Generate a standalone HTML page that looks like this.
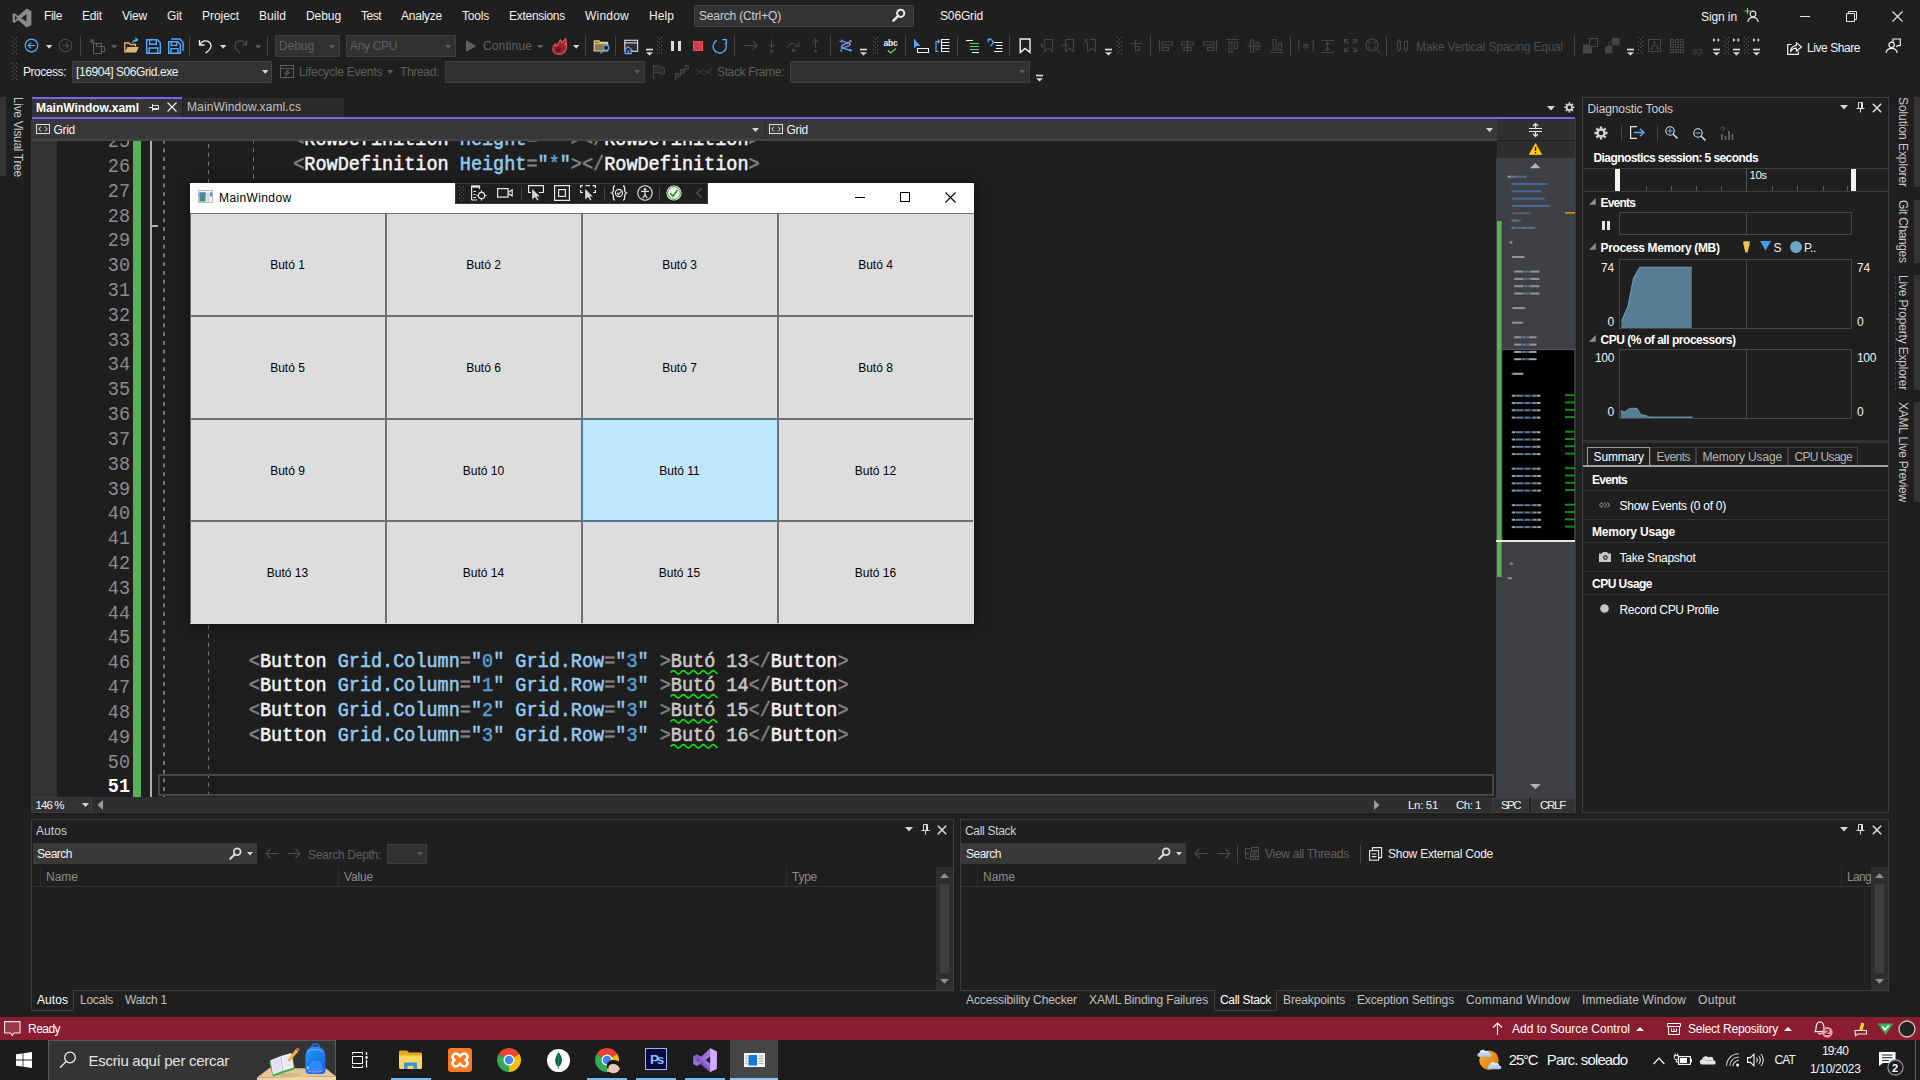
<!DOCTYPE html>
<html lang="ca"><head><meta charset="utf-8"><title>S06Grid - Microsoft Visual Studio</title>
<style>
*{box-sizing:border-box;margin:0;padding:0}
html,body{width:1920px;height:1080px;overflow:hidden}
body{background:#1f1f1f;position:relative;font-family:"Liberation Sans",sans-serif;font-size:12px;color:#fafafa;line-height:1}
.a{position:absolute}
.t{position:absolute;white-space:nowrap;line-height:16px;height:16px}
.dim{color:#6d6d6d}
svg{position:absolute;overflow:visible}
.combo{position:absolute;background:#333333;border:1px solid #424242}
.sep{position:absolute;width:1px;background:#424242}
.grip{position:absolute;width:5px;background-image:radial-gradient(circle,#5a5a5a 0.6px,transparent 0.9px);background-size:2px 2px}
.arr{position:absolute;width:0;height:0;border-left:3px solid transparent;border-right:3px solid transparent;border-top:3px solid #d0d0d0}
.arr.d{border-top-color:#5c5c5c}
.cl{-webkit-text-stroke:0.5px;transform:scaleY(1.07);transform-origin:0 17.3px;position:absolute;left:128px;white-space:pre;font-family:"Liberation Mono",monospace;font-size:18.51px;line-height:24.82px;height:24.82px;color:#c8c8c8}
.ln{transform:scaleY(1.1);transform-origin:0 0;position:absolute;left:58px;width:40px;text-align:right;font-family:"Liberation Mono",monospace;font-size:18.51px;line-height:24.82px;height:24.82px;color:#8c8c8c}
.ln.cur{color:#ffffff;font-weight:bold}
.cp{color:#808080}.ce{color:#f4f4f4}.cn{color:#92caf4}.cq{color:#92caf4}.cv{color:#569cd6}.cx{color:#c8c8c8}
.sq{position:relative;display:inline-block}
.gd{width:1.25px;background-image:repeating-linear-gradient(to bottom,#767676 0,#767676 4.3px,transparent 4.3px,transparent 8.76px);background-size:1.5px 8.76px;background-repeat:repeat-y}
.btn{position:absolute;background:#dddddd;border:1px solid #707070;color:#000;font-size:12px;display:flex;align-items:center;justify-content:center;letter-spacing:0;padding-top:1px;padding-right:1px}
.btn.hot{background:#bee6fd;border-color:#3c7fb1}

</style></head>
<body>
<!-- g_top -->
<svg style="left:12px;top:8px;" width="20" height="20" viewBox="0 0 20 20"><path d="M14.6 0.6 L19.4 2.9 V17.1 L14.6 19.4 L6.2 11.9 L2.3 14.9 L0.6 14 V6 L2.3 5.1 L6.2 8.1 Z M14.4 6.2 L9.3 10 L14.4 13.8 Z M2.9 7.6 V12.4 L5.3 10 Z" fill="#8a8a8a" fill-rule="evenodd"/></svg>
<span class="t" style="left:44px;top:7.84px;color:#f1f1f1;letter-spacing:-0.334px;">File</span>
<span class="t" style="left:82px;top:7.84px;color:#f1f1f1;letter-spacing:-0.169px;">Edit</span>
<span class="t" style="left:122px;top:7.84px;color:#f1f1f1;letter-spacing:-0.198px;">View</span>
<span class="t" style="left:167px;top:7.84px;color:#f1f1f1;letter-spacing:-0.111px;">Git</span>
<span class="t" style="left:202px;top:7.84px;color:#f1f1f1;letter-spacing:-0.049px;">Project</span>
<span class="t" style="left:259px;top:7.84px;color:#f1f1f1;letter-spacing:0.063px;">Build</span>
<span class="t" style="left:306px;top:7.84px;color:#f1f1f1;letter-spacing:-0.072px;">Debug</span>
<span class="t" style="left:361px;top:7.84px;color:#f1f1f1;letter-spacing:-0.502px;">Test</span>
<span class="t" style="left:401px;top:7.84px;color:#f1f1f1;letter-spacing:-0.241px;">Analyze</span>
<span class="t" style="left:462px;top:7.84px;color:#f1f1f1;letter-spacing:-0.202px;">Tools</span>
<span class="t" style="left:509px;top:7.84px;color:#f1f1f1;letter-spacing:-0.270px;">Extensions</span>
<span class="t" style="left:585px;top:7.84px;color:#f1f1f1;letter-spacing:0.220px;">Window</span>
<span class="t" style="left:649px;top:7.84px;color:#f1f1f1;letter-spacing:0.080px;">Help</span>
<div class="a" style="left:694px;top:5px;width:220px;height:22px;background:#333333;border:1px solid #424242;"></div>
<span class="t" style="left:699px;top:7.84px;color:#d0d0d0;letter-spacing:-0.157px;">Search (Ctrl+Q)</span>
<svg style="left:892px;top:8px;" width="14" height="14" viewBox="0 0 14 14"><circle cx="8.7" cy="5.3" r="3.6" fill="none" stroke="#e8e8e8" stroke-width="2"/><path d="M6.2 7.8 L1.4 12.6" stroke="#e8e8e8" stroke-width="2.5" stroke-linecap="round"/></svg>
<span class="t" style="left:940px;top:7.84px;color:#f1f1f1;letter-spacing:-0.146px;">S06Grid</span>
<span class="t" style="left:1701px;top:8.84px;color:#f1f1f1;letter-spacing:-0.099px;">Sign in</span>
<svg style="left:1744px;top:7px;" width="16" height="16" viewBox="0 0 16 16"><circle cx="9" cy="7" r="2.8" fill="none" stroke="#e0e0e0" stroke-width="1.2"/><path d="M3.8 15 C4.4 11.6 6.4 10.4 9 10.4 C11.6 10.4 13.6 11.6 14.2 15" fill="none" stroke="#e0e0e0" stroke-width="1.2"/><path d="M3.5 1 V7 M0.5 4 H6.5" stroke="#5fd35f" stroke-width="1.2"/></svg>
<div class="a" style="left:1800px;top:16px;width:10px;height:1px;background:#e6e6e6;"></div>
<svg style="left:1846px;top:11px;" width="11" height="11" viewBox="0 0 11 11"><path d="M0.5 2.5 H8.5 V10.5 H0.5 Z M2.5 2.5 V0.5 H10.5 V8.5 H8.5" fill="none" stroke="#e6e6e6" stroke-width="1"/></svg>
<svg style="left:1892px;top:11px;" width="11" height="11" viewBox="0 0 11 11"><path d="M0.5 0.5 L10.5 10.5 M10.5 0.5 L0.5 10.5" stroke="#e6e6e6" stroke-width="1.1"/></svg>
<svg style="left:12px;top:37px;" width="5" height="18" viewBox="0 0 5 18"><rect x="0" y="0" width="1" height="1" fill="#5c5c5c"/><rect x="4" y="0" width="1" height="1" fill="#5c5c5c"/><rect x="2" y="2" width="1" height="1" fill="#5c5c5c"/><rect x="0" y="4" width="1" height="1" fill="#5c5c5c"/><rect x="4" y="4" width="1" height="1" fill="#5c5c5c"/><rect x="2" y="6" width="1" height="1" fill="#5c5c5c"/><rect x="0" y="8" width="1" height="1" fill="#5c5c5c"/><rect x="4" y="8" width="1" height="1" fill="#5c5c5c"/><rect x="2" y="10" width="1" height="1" fill="#5c5c5c"/><rect x="0" y="12" width="1" height="1" fill="#5c5c5c"/><rect x="4" y="12" width="1" height="1" fill="#5c5c5c"/><rect x="2" y="14" width="1" height="1" fill="#5c5c5c"/><rect x="0" y="16" width="1" height="1" fill="#5c5c5c"/><rect x="4" y="16" width="1" height="1" fill="#5c5c5c"/></svg>
<svg style="left:24px;top:38px;" width="16" height="16" viewBox="0 0 16 16"><circle cx="7.5" cy="7.5" r="6.3" fill="none" stroke="#55aaff" stroke-width="1.2"/><path d="M11 7.5 H4.5 M7.2 4.6 L4.3 7.5 L7.2 10.4" fill="none" stroke="#55aaff" stroke-width="1.2"/></svg>
<svg style="left:46px;top:45px;" width="6.4" height="3.7" viewBox="0 0 6.4 3.7"><path d="M0 0H6.4 L3.2 3.7Z" fill="#d6d6d6"/></svg>
<svg style="left:58px;top:38px;" width="16" height="16" viewBox="0 0 16 16"><circle cx="7.5" cy="7.5" r="6.3" fill="none" stroke="#4a4a4a" stroke-width="1.1"/><path d="M4 7.5 H10.5 M7.8 4.6 L10.7 7.5 L7.8 10.4" fill="none" stroke="#4a4a4a" stroke-width="1.1"/></svg>
<div class="sep" style="left:80px;top:36px;height:20px;background:#424242"></div>
<svg style="left:89px;top:38px;" width="16" height="16" viewBox="0 0 16 16"><path d="M4.5 5.5 H12.5 V15.5 H4.5 Z M7.5 8.5 H15.5 V13.5 H12.5 M7.5 8.5 V5.5" fill="none" stroke="#5f5f5f" stroke-width="1"/><path d="M3 0.5 V5.5 M0.5 3 H5.5 M1.2 1.2 L4.8 4.8 M4.8 1.2 L1.2 4.8" stroke="#5f5f5f" stroke-width="0.8"/></svg>
<svg style="left:111px;top:45px;" width="6.4" height="3.7" viewBox="0 0 6.4 3.7"><path d="M0 0H6.4 L3.2 3.7Z" fill="#5c5c5c"/></svg>
<svg style="left:124px;top:38px;" width="16" height="16" viewBox="0 0 16 16"><path d="M0.8 14.5 V5 H5 L6.3 6.5 H11.5 V8.5" fill="none" stroke="#dcb67a" stroke-width="1.3"/><path d="M0.8 14.5 L3.4 9 H14.8 L12.2 14.5 Z" fill="#dcb67a"/><path d="M8.8 5 C9 2.8 10.5 1.8 13 1.8 M11.4 0 L13.4 1.8 L11.4 3.8" fill="none" stroke="#55aaff" stroke-width="1.3"/></svg>
<svg style="left:146px;top:39px;" width="15" height="15" viewBox="0 0 15 15"><path d="M0.7 0.7 H11.3 L14.3 3.7 V14.3 H0.7 Z" fill="none" stroke="#55aaff" stroke-width="1.4"/><path d="M3.7 0.7 V5.3 H10.3 V0.7 M3.2 14.3 V9 H11.8 V14.3" fill="none" stroke="#55aaff" stroke-width="1.4"/></svg>
<svg style="left:168px;top:38px;" width="16" height="16" viewBox="0 0 16 16"><path d="M0.7 3.7 H9.8 L12.3 6.2 V15.3 H0.7 Z" fill="none" stroke="#55aaff" stroke-width="1.4"/><path d="M3.2 3.7 V7.4 H8.8 V3.7 M3 15.3 V10.6 H10 V15.3" fill="none" stroke="#55aaff" stroke-width="1.3"/><path d="M3.2 1 H11.8 L15 4.2 V13" fill="none" stroke="#55aaff" stroke-width="1.4"/></svg>
<div class="sep" style="left:189px;top:36px;height:20px;background:#424242"></div>
<svg style="left:198px;top:38px;" width="16" height="16" viewBox="0 0 16 16"><path d="M1.5 2 V7 H6.5" fill="none" stroke="#f1f1f1" stroke-width="1.3"/><path d="M1.8 6.8 C3.5 3.2 7.5 1.8 10.6 3.6 C13.8 5.6 13.6 9.4 11.4 11.6 L7.6 15.2" fill="none" stroke="#f1f1f1" stroke-width="1.3"/></svg>
<svg style="left:220px;top:45px;" width="6.4" height="3.7" viewBox="0 0 6.4 3.7"><path d="M0 0H6.4 L3.2 3.7Z" fill="#d6d6d6"/></svg>
<svg style="left:232px;top:38px;" width="16" height="16" viewBox="0 0 16 16"><path d="M14.5 2 V7 H9.5" fill="none" stroke="#4d4d4d" stroke-width="1.2"/><path d="M14.2 6.8 C12.5 3.2 8.5 1.8 5.4 3.6 C2.2 5.6 2.4 9.4 4.6 11.6 L8.4 15.2" fill="none" stroke="#4d4d4d" stroke-width="1.2"/></svg>
<svg style="left:255px;top:45px;" width="6.4" height="3.7" viewBox="0 0 6.4 3.7"><path d="M0 0H6.4 L3.2 3.7Z" fill="#5c5c5c"/></svg>
<div class="sep" style="left:267px;top:36px;height:20px;background:#424242"></div>
<div class="a" style="left:275px;top:35px;width:65px;height:22px;background:#313131;border:1px solid #3f3f3f;"></div>
<span class="t" style="left:279px;top:38.24px;color:#5f5f5f;letter-spacing:-0.072px;">Debug</span>
<svg style="left:329px;top:45px;" width="6.4" height="3.7" viewBox="0 0 6.4 3.7"><path d="M0 0H6.4 L3.2 3.7Z" fill="#5c5c5c"/></svg>
<div class="a" style="left:346px;top:35px;width:110px;height:22px;background:#313131;border:1px solid #3f3f3f;"></div>
<span class="t" style="left:350px;top:38.24px;color:#5f5f5f;letter-spacing:-0.335px;">Any CPU</span>
<svg style="left:445px;top:45px;" width="6.4" height="3.7" viewBox="0 0 6.4 3.7"><path d="M0 0H6.4 L3.2 3.7Z" fill="#5c5c5c"/></svg>
<svg style="left:466px;top:40px;" width="11" height="13" viewBox="0 0 11 13"><path d="M0 0 L10.5 6 L0 12 Z" fill="#5f5f5f"/></svg>
<span class="t" style="left:483px;top:38.24px;color:#5f5f5f;letter-spacing:0.121px;">Continue</span>
<svg style="left:537px;top:45px;" width="6.4" height="3.7" viewBox="0 0 6.4 3.7"><path d="M0 0H6.4 L3.2 3.7Z" fill="#5c5c5c"/></svg>
<svg style="left:552px;top:37.5px;" width="16" height="17" viewBox="0 0 16 17"><path d="M7 16.4 C3 16.4 0.8 14 0.8 11 C0.8 8.4 2.4 6.8 3.6 5.8 C3.6 7 4 7.8 4.8 8.2 C5.2 5.4 7.6 4.4 8.2 1.8 C9.4 2.6 9.8 3.8 9.6 5 C11.4 4 12.6 2.2 13.6 0.6 C14.6 3 14 5.2 12.8 6.8 C13.6 6.6 14 6.2 14.4 5.6 C15 8 14.6 10.6 13.4 12.8 C12.2 15 9.8 16.4 7 16.4 Z" fill="#93262e" stroke="#ea4d58" stroke-width="1.2" stroke-linejoin="round"/><circle cx="6.4" cy="11.6" r="2.5" fill="#6a161c"/></svg>
<svg style="left:573px;top:45px;" width="6.4" height="3.7" viewBox="0 0 6.4 3.7"><path d="M0 0H6.4 L3.2 3.7Z" fill="#d6d6d6"/></svg>
<div class="sep" style="left:585px;top:36px;height:20px;background:#424242"></div>
<svg style="left:593px;top:38px;" width="16" height="16" viewBox="0 0 16 16"><path d="M1.2 2.9 H6 L7.4 4.4 H14.6 V13 H1.2 Z" fill="#8a7a52" stroke="#e8cd8b" stroke-width="1.2" stroke-linejoin="round"/><path d="M1.2 5.6 H14.6" stroke="#e8cd8b" stroke-width="1"/><circle cx="13.1" cy="9.8" r="2.6" fill="#1f1f1f" stroke="#55aaff" stroke-width="1.3"/><path d="M11.2 11.8 L7.4 15.4" stroke="#55aaff" stroke-width="1.4"/></svg>
<div class="sep" style="left:615px;top:36px;height:20px;background:#424242"></div>
<svg style="left:623px;top:38px;" width="16" height="16" viewBox="0 0 16 16"><rect x="1.8" y="2.3" width="12.8" height="11" fill="#2d2d2d" stroke="#d4d4d4" stroke-width="1.2"/><path d="M1.8 4.9 H14.6" stroke="#d4d4d4" stroke-width="1.2"/><path d="M0.8 12.6 L5.2 8.8 L9.6 12.6 M2.2 11.6 V15.6 H8.2 V11.6" fill="#1f1f1f" stroke="#55aaff" stroke-width="1.2"/><rect x="4.5" y="12.6" width="1.6" height="2.6" fill="#55aaff"/></svg>
<svg style="left:646px;top:49px;" width="7" height="7" viewBox="0 0 7 7"><rect x="0" y="-0.3" width="7" height="1.7" fill="#d6d6d6"/><path d="M0 3.2H7L3.5 6.4Z" fill="#d6d6d6"/></svg>
<svg style="left:657px;top:37px;" width="5" height="18" viewBox="0 0 5 18"><rect x="0" y="0" width="1" height="1" fill="#5c5c5c"/><rect x="4" y="0" width="1" height="1" fill="#5c5c5c"/><rect x="2" y="2" width="1" height="1" fill="#5c5c5c"/><rect x="0" y="4" width="1" height="1" fill="#5c5c5c"/><rect x="4" y="4" width="1" height="1" fill="#5c5c5c"/><rect x="2" y="6" width="1" height="1" fill="#5c5c5c"/><rect x="0" y="8" width="1" height="1" fill="#5c5c5c"/><rect x="4" y="8" width="1" height="1" fill="#5c5c5c"/><rect x="2" y="10" width="1" height="1" fill="#5c5c5c"/><rect x="0" y="12" width="1" height="1" fill="#5c5c5c"/><rect x="4" y="12" width="1" height="1" fill="#5c5c5c"/><rect x="2" y="14" width="1" height="1" fill="#5c5c5c"/><rect x="0" y="16" width="1" height="1" fill="#5c5c5c"/><rect x="4" y="16" width="1" height="1" fill="#5c5c5c"/></svg>
<div class="a" style="left:671px;top:41px;width:3.2px;height:10px;background:#dcdcdc;"></div>
<div class="a" style="left:677.6px;top:41px;width:3.2px;height:10px;background:#dcdcdc;"></div>
<div class="a" style="left:693px;top:41px;width:10px;height:10px;background:#cf3f4a;border:1px solid #ec4e59;"></div>
<svg style="left:712px;top:38px;" width="16" height="16" viewBox="0 0 16 16"><path d="M4.91 2.42 A6.6 6.6 0 1 0 13.42 5.1" fill="none" stroke="#55aaff" stroke-width="1.3"/><path d="M10.3 1.6 H14.4 V5.9" fill="none" stroke="#55aaff" stroke-width="1.3"/></svg>
<div class="sep" style="left:734px;top:36px;height:20px;background:#424242"></div>
<svg style="left:743px;top:38px;" width="16" height="16" viewBox="0 0 16 16"><path d="M1 7.5 H14 M9.5 3 L14 7.5 L9.5 12" fill="none" stroke="#454545" stroke-width="1.1"/></svg>
<svg style="left:764px;top:38px;" width="16" height="16" viewBox="0 0 16 16"><path d="M7.5 1 V9 M4.5 6.2 L7.5 9.2 L10.5 6.2" fill="none" stroke="#454545" stroke-width="1.1"/><circle cx="7.5" cy="13" r="1.6" fill="#454545"/></svg>
<svg style="left:786px;top:38px;" width="16" height="16" viewBox="0 0 16 16"><path d="M1.5 10 C2.5 5.5 8.5 3.5 12.5 8 M12.8 3.4 V8.2 H8" fill="none" stroke="#454545" stroke-width="1.1"/><circle cx="7.5" cy="12.6" r="1.6" fill="#454545"/></svg>
<svg style="left:808px;top:38px;" width="16" height="16" viewBox="0 0 16 16"><path d="M7.5 9.5 V1.5 M4.5 4.4 L7.5 1.4 L10.5 4.4" fill="none" stroke="#454545" stroke-width="1.1"/><circle cx="7.5" cy="13" r="1.6" fill="#454545"/></svg>
<div class="sep" style="left:830px;top:36px;height:20px;background:#424242"></div>
<svg style="left:838px;top:38px;" width="16" height="16" viewBox="0 0 16 16"><path d="M3.4 1.6 C4.6 5.2 12 3.4 12.4 6.4 C12 9.2 4.2 8 3.2 11.6" fill="none" stroke="#a67ee8" stroke-width="1.3"/><path d="M12.2 3 C11 6.6 4.4 5 3.4 8.6 C3.6 11.6 11 10 12.6 13.4" fill="none" stroke="#55aaff" stroke-width="1.3"/><path d="M1.6 2.6 L4.2 4.6 M11.4 11 L14 13" stroke="#55aaff" stroke-width="1.1"/><path d="M11.6 2 L14 3.4 M1.8 12.2 L4.2 13.4" stroke="#a67ee8" stroke-width="1.1"/></svg>
<svg style="left:860px;top:49px;" width="7" height="7" viewBox="0 0 7 7"><rect x="0" y="-0.3" width="7" height="1.7" fill="#d6d6d6"/><path d="M0 3.2H7L3.5 6.4Z" fill="#d6d6d6"/></svg>
<svg style="left:873px;top:37px;" width="5" height="18" viewBox="0 0 5 18"><rect x="0" y="0" width="1" height="1" fill="#5c5c5c"/><rect x="4" y="0" width="1" height="1" fill="#5c5c5c"/><rect x="2" y="2" width="1" height="1" fill="#5c5c5c"/><rect x="0" y="4" width="1" height="1" fill="#5c5c5c"/><rect x="4" y="4" width="1" height="1" fill="#5c5c5c"/><rect x="2" y="6" width="1" height="1" fill="#5c5c5c"/><rect x="0" y="8" width="1" height="1" fill="#5c5c5c"/><rect x="4" y="8" width="1" height="1" fill="#5c5c5c"/><rect x="2" y="10" width="1" height="1" fill="#5c5c5c"/><rect x="0" y="12" width="1" height="1" fill="#5c5c5c"/><rect x="4" y="12" width="1" height="1" fill="#5c5c5c"/><rect x="2" y="14" width="1" height="1" fill="#5c5c5c"/><rect x="0" y="16" width="1" height="1" fill="#5c5c5c"/><rect x="4" y="16" width="1" height="1" fill="#5c5c5c"/></svg>
<span class="t" style="left:883.5px;top:35.05px;font-size:8.5px;color:#f1f1f1;font-weight:bold;letter-spacing:-0.215px;">abc</span>
<svg style="left:887px;top:48px;" width="10" height="6" viewBox="0 0 10 6"><path d="M0.8 2.2 L3.6 5 L9 0.6" fill="none" stroke="#5fd35f" stroke-width="1.3"/></svg>
<div class="sep" style="left:905px;top:36px;height:20px;background:#424242"></div>
<svg style="left:913px;top:38px;" width="16" height="16" viewBox="0 0 16 16"><path d="M1 0.6 V10.4 L3.6 8 H7.2 Z" fill="#55aaff"/><path d="M4.5 10.5 H15.5 V14.5 H4.5 Z" fill="none" stroke="#f1f1f1" stroke-width="1.1"/></svg>
<svg style="left:935px;top:38px;" width="16" height="16" viewBox="0 0 16 16"><path d="M6.5 1.5 H14.5 M6.5 4.5 H14.5 M6.5 7.5 H14.5 M6.5 10.5 H14.5 M6.5 13.5 H14.5 M6.5 1 V14" fill="none" stroke="#f1f1f1" stroke-width="1.1"/><path d="M3.5 13.5 H1 V3.5 H4 M2.6 1.6 L4.6 3.5 L2.6 5.4" fill="none" stroke="#55aaff" stroke-width="1.2"/></svg>
<div class="sep" style="left:957px;top:36px;height:20px;background:#424242"></div>
<svg style="left:965px;top:38px;" width="16" height="16" viewBox="0 0 16 16"><path d="M1 2.5 H8" stroke="#f1f1f1" stroke-width="1.1"/><path d="M5 5.5 H14 M5 8.5 H14 M5 11.5 H14" stroke="#5fd35f" stroke-width="1.1"/><path d="M7 14.5 H14" stroke="#f1f1f1" stroke-width="1.1"/></svg>
<svg style="left:987px;top:38px;" width="16" height="16" viewBox="0 0 16 16"><path d="M7 4.5 H15.5 M9 7.5 H15.5 M9 10.5 H15.5 M7 13.5 H15.5" stroke="#f1f1f1" stroke-width="1.1"/><path d="M1.2 4.6 V1.2 H4.6 M1.4 1.4 C5 1.2 7.4 3.2 5.4 6 L3.6 8" fill="none" stroke="#55aaff" stroke-width="1.2"/></svg>
<div class="sep" style="left:1009px;top:36px;height:20px;background:#424242"></div>
<svg style="left:1019px;top:38px;" width="13" height="16" viewBox="0 0 13 16"><path d="M1.2 1 H11 V14.4 L6.1 10.4 L1.2 14.4 Z" fill="none" stroke="#f1f1f1" stroke-width="1.4"/></svg>
<svg style="left:1040px;top:38px;" width="16" height="16" viewBox="0 0 16 16"><path d="M4.5 1.5 H12.5 V13.5 L8.5 10.2 L4.5 13.5 V9 M4.5 5.5 V1.5 M0.5 7.2 H6.5 M3 4.8 L0.6 7.2 L3 9.6" fill="none" stroke="#454545" stroke-width="1.1"/></svg>
<svg style="left:1061px;top:38px;" width="16" height="16" viewBox="0 0 16 16"><path d="M4.5 1.5 H12.5 V13.5 L8.5 10.2 L4.5 13.5 V9 M4.5 5.5 V1.5 M0.5 7.2 H6.5 M4 4.8 L6.4 7.2 L4 9.6" fill="none" stroke="#454545" stroke-width="1.1"/></svg>
<svg style="left:1083px;top:38px;" width="16" height="16" viewBox="0 0 16 16"><path d="M4.5 4.5 V13.5 L8.5 10.2 L12.5 13.5 V1.5 H7 M0.8 0.8 L5.2 5.2 M5.2 0.8 L0.8 5.2" fill="none" stroke="#454545" stroke-width="1.1"/></svg>
<svg style="left:1105px;top:49px;" width="7" height="7" viewBox="0 0 7 7"><rect x="0" y="-0.3" width="7" height="1.7" fill="#d6d6d6"/><path d="M0 3.2H7L3.5 6.4Z" fill="#d6d6d6"/></svg>
<svg style="left:1117px;top:37px;" width="5" height="18" viewBox="0 0 5 18"><rect x="0" y="0" width="1" height="1" fill="#5c5c5c"/><rect x="4" y="0" width="1" height="1" fill="#5c5c5c"/><rect x="2" y="2" width="1" height="1" fill="#5c5c5c"/><rect x="0" y="4" width="1" height="1" fill="#5c5c5c"/><rect x="4" y="4" width="1" height="1" fill="#5c5c5c"/><rect x="2" y="6" width="1" height="1" fill="#5c5c5c"/><rect x="0" y="8" width="1" height="1" fill="#5c5c5c"/><rect x="4" y="8" width="1" height="1" fill="#5c5c5c"/><rect x="2" y="10" width="1" height="1" fill="#5c5c5c"/><rect x="0" y="12" width="1" height="1" fill="#5c5c5c"/><rect x="4" y="12" width="1" height="1" fill="#5c5c5c"/><rect x="2" y="14" width="1" height="1" fill="#5c5c5c"/><rect x="0" y="16" width="1" height="1" fill="#5c5c5c"/><rect x="4" y="16" width="1" height="1" fill="#5c5c5c"/></svg>
<svg style="left:1128px;top:38px;" width="16" height="16" viewBox="0 0 16 16"><path d="M2 5.5 H14 M7.5 2 V14 M7.5 8.5 H11.5 V12.5 H7.5" fill="none" stroke="#454545" stroke-width="1.1"/></svg>
<div class="sep" style="left:1150px;top:36px;height:20px;background:#424242"></div>
<svg style="left:1158px;top:38px;" width="16" height="16" viewBox="0 0 16 16"><path d="M1.5 1.5 V14.5 M4 4 H14.5 V7 H4 Z M4 9.5 H10.5 V12.5 H4 Z" fill="none" stroke="#454545" stroke-width="1.1"/></svg>
<svg style="left:1180px;top:38px;" width="16" height="16" viewBox="0 0 16 16"><path d="M7.5 1.5 V14.5 M1.5 4 H13.5 V7 H1.5 Z M4 9.5 H11 V12.5 H4 Z" fill="none" stroke="#454545" stroke-width="1.1"/></svg>
<svg style="left:1202px;top:38px;" width="16" height="16" viewBox="0 0 16 16"><path d="M14.5 1.5 V14.5 M1.5 4 H12 V7 H1.5 Z M5.5 9.5 H12 V12.5 H5.5 Z" fill="none" stroke="#454545" stroke-width="1.1"/></svg>
<svg style="left:1225px;top:38px;" width="16" height="16" viewBox="0 0 16 16"><path d="M1 1.5 H14 M4 4 H7 V14.5 H4 Z M9.5 4 H12.5 V10.5 H9.5 Z" fill="none" stroke="#454545" stroke-width="1.1"/></svg>
<svg style="left:1246px;top:38px;" width="16" height="16" viewBox="0 0 16 16"><path d="M1 8 H15 M4.5 2 H7.5 V14 H4.5 Z M10 4.5 H13 V11.5 H10 Z" fill="none" stroke="#454545" stroke-width="1.1"/></svg>
<svg style="left:1269px;top:38px;" width="16" height="16" viewBox="0 0 16 16"><path d="M1 14.5 H14 M4 1.5 H7 V12 H4 Z M9.5 5.5 H12.5 V12 H9.5 Z" fill="none" stroke="#454545" stroke-width="1.1"/></svg>
<div class="sep" style="left:1290px;top:36px;height:20px;background:#424242"></div>
<svg style="left:1298px;top:38px;" width="16" height="16" viewBox="0 0 16 16"><path d="M0.8 2 V14 M15.2 2 V14 M8 4.5 V11.5 M5 6.2 L11 9.8 M11 6.2 L5 9.8" fill="none" stroke="#454545" stroke-width="1.1"/></svg>
<svg style="left:1320px;top:38px;" width="16" height="16" viewBox="0 0 16 16"><path d="M1 2.5 H14 M1 14.5 H14 M7.5 4.5 V12.5 M5.5 6.5 L7.5 4.5 L9.5 6.5 M5.5 10.5 L7.5 12.5 L9.5 10.5" fill="none" stroke="#454545" stroke-width="1.1"/></svg>
<svg style="left:1343px;top:38px;" width="16" height="16" viewBox="0 0 16 16"><path d="M1.5 5.5 V1.5 H5.5 M9.5 1.5 H13.5 V5.5 M13.5 9.5 V13.5 H9.5 M5.5 13.5 H1.5 V9.5 M1.5 1.5 L5.5 5.5 M13.5 1.5 L9.5 5.5 M13.5 13.5 L9.5 9.5 M1.5 13.5 L5.5 9.5" fill="none" stroke="#454545" stroke-width="1.1"/></svg>
<svg style="left:1365px;top:38px;" width="16" height="16" viewBox="0 0 16 16"><circle cx="7" cy="7" r="6" fill="none" stroke="#454545" stroke-width="1.1"/><path d="M11.4 11.4 L15 15 M4 6 V4 H6 M8 4 H10 V6 M10 8 V10 H8 M6 10 H4 V8" fill="none" stroke="#454545" stroke-width="1.1"/></svg>
<div class="sep" style="left:1386px;top:36px;height:20px;background:#424242"></div>
<svg style="left:1396px;top:38px;" width="16" height="16" viewBox="0 0 16 16"><path d="M1.5 3.5 H4.5 V11.5 H1.5 Z M8.5 3.5 H11.5 V11.5 H8.5 Z M3 1 V3.5 M3 11.5 V14 M10 1 V3.5 M10 11.5 V14" fill="none" stroke="#454545" stroke-width="1.1"/></svg>
<span class="t" style="left:1416px;top:38.84px;color:#4d4d4d;letter-spacing:-0.213px;">Make Vertical Spacing Equal</span>
<div class="sep" style="left:1574px;top:36px;height:20px;background:#424242"></div>
<svg style="left:1583px;top:38px;" width="16" height="16" viewBox="0 0 16 16"><rect x="0" y="6.5" width="9" height="9" fill="#454545"/><rect x="6.5" y="0.5" width="8" height="8" fill="#1f1f1f" stroke="#454545"/></svg>
<svg style="left:1605px;top:38px;" width="16" height="16" viewBox="0 0 16 16"><rect x="0" y="8" width="7.5" height="7.5" fill="#454545"/><rect x="7" y="0" width="7.5" height="7.5" fill="#454545"/><path d="M4 8 V4 H7" fill="none" stroke="#454545"/></svg>
<svg style="left:1627px;top:49px;" width="7" height="7" viewBox="0 0 7 7"><rect x="0" y="-0.3" width="7" height="1.7" fill="#d6d6d6"/><path d="M0 3.2H7L3.5 6.4Z" fill="#d6d6d6"/></svg>
<svg style="left:1638px;top:37px;" width="5" height="18" viewBox="0 0 5 18"><rect x="0" y="0" width="1" height="1" fill="#5c5c5c"/><rect x="4" y="0" width="1" height="1" fill="#5c5c5c"/><rect x="2" y="2" width="1" height="1" fill="#5c5c5c"/><rect x="0" y="4" width="1" height="1" fill="#5c5c5c"/><rect x="4" y="4" width="1" height="1" fill="#5c5c5c"/><rect x="2" y="6" width="1" height="1" fill="#5c5c5c"/><rect x="0" y="8" width="1" height="1" fill="#5c5c5c"/><rect x="4" y="8" width="1" height="1" fill="#5c5c5c"/><rect x="2" y="10" width="1" height="1" fill="#5c5c5c"/><rect x="0" y="12" width="1" height="1" fill="#5c5c5c"/><rect x="4" y="12" width="1" height="1" fill="#5c5c5c"/><rect x="2" y="14" width="1" height="1" fill="#5c5c5c"/><rect x="0" y="16" width="1" height="1" fill="#5c5c5c"/><rect x="4" y="16" width="1" height="1" fill="#5c5c5c"/></svg>
<svg style="left:1648px;top:38px;" width="16" height="16" viewBox="0 0 16 16"><rect x="0.5" y="1.5" width="12" height="12" fill="none" stroke="#454545"/><path d="M6.5 4 V7.5 M3.5 10.5 V7.5 H9.5 V10.5" fill="none" stroke="#454545"/><rect x="5.5" y="3.5" width="2" height="2" fill="#454545"/><rect x="2.5" y="9.5" width="2" height="2" fill="#454545"/><rect x="8.5" y="9.5" width="2" height="2" fill="#454545"/></svg>
<svg style="left:1670px;top:38px;" width="16" height="16" viewBox="0 0 16 16"><rect x="0.5" y="1.5" width="3" height="3" fill="none" stroke="#454545"/><rect x="5.5" y="1.5" width="3" height="3" fill="none" stroke="#454545"/><rect x="10.5" y="1.5" width="3" height="3" fill="none" stroke="#454545"/><rect x="0.5" y="6.5" width="3" height="3" fill="none" stroke="#454545"/><rect x="5.5" y="6.5" width="3" height="3" fill="none" stroke="#454545"/><rect x="10.5" y="6.5" width="3" height="3" fill="none" stroke="#454545"/><rect x="0.5" y="11.5" width="3" height="3" fill="none" stroke="#454545"/><rect x="5.5" y="11.5" width="3" height="3" fill="none" stroke="#454545"/><rect x="10.5" y="11.5" width="3" height="3" fill="none" stroke="#454545"/></svg>
<span class="t" style="left:1692px;top:43.57px;font-size:7px;color:#454545;letter-spacing:-0.669px;">SQL</span>
<svg style="left:1713px;top:38px;" width="8" height="4" viewBox="0 0 8 4"><path d="M0 0 L2.5 2 L0 4 Z M4.5 0 L7 2 L4.5 4 Z" fill="#d6d6d6"/></svg>
<svg style="left:1713px;top:49px;" width="7" height="7" viewBox="0 0 7 7"><rect x="0" y="-0.3" width="7" height="1.7" fill="#d6d6d6"/><path d="M0 3.2H7L3.5 6.4Z" fill="#d6d6d6"/></svg>
<svg style="left:1724px;top:37px;" width="5" height="18" viewBox="0 0 5 18"><rect x="0" y="0" width="1" height="1" fill="#5c5c5c"/><rect x="4" y="0" width="1" height="1" fill="#5c5c5c"/><rect x="2" y="2" width="1" height="1" fill="#5c5c5c"/><rect x="0" y="4" width="1" height="1" fill="#5c5c5c"/><rect x="4" y="4" width="1" height="1" fill="#5c5c5c"/><rect x="2" y="6" width="1" height="1" fill="#5c5c5c"/><rect x="0" y="8" width="1" height="1" fill="#5c5c5c"/><rect x="4" y="8" width="1" height="1" fill="#5c5c5c"/><rect x="2" y="10" width="1" height="1" fill="#5c5c5c"/><rect x="0" y="12" width="1" height="1" fill="#5c5c5c"/><rect x="4" y="12" width="1" height="1" fill="#5c5c5c"/><rect x="2" y="14" width="1" height="1" fill="#5c5c5c"/><rect x="0" y="16" width="1" height="1" fill="#5c5c5c"/><rect x="4" y="16" width="1" height="1" fill="#5c5c5c"/></svg>
<svg style="left:1733px;top:38px;" width="8" height="4" viewBox="0 0 8 4"><path d="M0 0 L2.5 2 L0 4 Z M4.5 0 L7 2 L4.5 4 Z" fill="#d6d6d6"/></svg>
<svg style="left:1733px;top:49px;" width="7" height="7" viewBox="0 0 7 7"><rect x="0" y="-0.3" width="7" height="1.7" fill="#d6d6d6"/><path d="M0 3.2H7L3.5 6.4Z" fill="#d6d6d6"/></svg>
<svg style="left:1744px;top:37px;" width="5" height="18" viewBox="0 0 5 18"><rect x="0" y="0" width="1" height="1" fill="#5c5c5c"/><rect x="4" y="0" width="1" height="1" fill="#5c5c5c"/><rect x="2" y="2" width="1" height="1" fill="#5c5c5c"/><rect x="0" y="4" width="1" height="1" fill="#5c5c5c"/><rect x="4" y="4" width="1" height="1" fill="#5c5c5c"/><rect x="2" y="6" width="1" height="1" fill="#5c5c5c"/><rect x="0" y="8" width="1" height="1" fill="#5c5c5c"/><rect x="4" y="8" width="1" height="1" fill="#5c5c5c"/><rect x="2" y="10" width="1" height="1" fill="#5c5c5c"/><rect x="0" y="12" width="1" height="1" fill="#5c5c5c"/><rect x="4" y="12" width="1" height="1" fill="#5c5c5c"/><rect x="2" y="14" width="1" height="1" fill="#5c5c5c"/><rect x="0" y="16" width="1" height="1" fill="#5c5c5c"/><rect x="4" y="16" width="1" height="1" fill="#5c5c5c"/></svg>
<svg style="left:1753px;top:38px;" width="8" height="4" viewBox="0 0 8 4"><path d="M0 0 L2.5 2 L0 4 Z M4.5 0 L7 2 L4.5 4 Z" fill="#d6d6d6"/></svg>
<svg style="left:1753px;top:49px;" width="7" height="7" viewBox="0 0 7 7"><rect x="0" y="-0.3" width="7" height="1.7" fill="#d6d6d6"/><path d="M0 3.2H7L3.5 6.4Z" fill="#d6d6d6"/></svg>
<svg style="left:1787px;top:40px;" width="16" height="16" viewBox="0 0 16 16"><path d="M4.5 4.5 H0.7 V14.3 H11.3 V11.5" fill="none" stroke="#f1f1f1" stroke-width="1.2"/><path d="M3.6 11.6 C4 7.6 6.4 5.6 9.4 5.6 V2.6 L14.4 7 L9.4 11.2 V8.2 C7 8.2 5 9 3.6 11.6 Z" fill="none" stroke="#f1f1f1" stroke-width="1.2" stroke-linejoin="round"/></svg>
<span class="t" style="left:1807px;top:39.84px;color:#f1f1f1;letter-spacing:-0.437px;">Live Share</span>
<svg style="left:1885px;top:38px;" width="16" height="16" viewBox="0 0 16 16"><path d="M8 6.5 V1 H15.3 V7.6 H12.6 L11.4 9" fill="none" stroke="#f1f1f1" stroke-width="1.2"/><circle cx="6.6" cy="6.8" r="2.7" fill="#1f1f1f" stroke="#f1f1f1" stroke-width="1.2"/><path d="M1 15 C1.6 11.6 3.8 10.4 6.6 10.4 C9.4 10.4 11.6 11.6 12.2 15" fill="none" stroke="#f1f1f1" stroke-width="1.2"/></svg>
<svg style="left:12px;top:63px;" width="5" height="18" viewBox="0 0 5 18"><rect x="0" y="0" width="1" height="1" fill="#5c5c5c"/><rect x="4" y="0" width="1" height="1" fill="#5c5c5c"/><rect x="2" y="2" width="1" height="1" fill="#5c5c5c"/><rect x="0" y="4" width="1" height="1" fill="#5c5c5c"/><rect x="4" y="4" width="1" height="1" fill="#5c5c5c"/><rect x="2" y="6" width="1" height="1" fill="#5c5c5c"/><rect x="0" y="8" width="1" height="1" fill="#5c5c5c"/><rect x="4" y="8" width="1" height="1" fill="#5c5c5c"/><rect x="2" y="10" width="1" height="1" fill="#5c5c5c"/><rect x="0" y="12" width="1" height="1" fill="#5c5c5c"/><rect x="4" y="12" width="1" height="1" fill="#5c5c5c"/><rect x="2" y="14" width="1" height="1" fill="#5c5c5c"/><rect x="0" y="16" width="1" height="1" fill="#5c5c5c"/><rect x="4" y="16" width="1" height="1" fill="#5c5c5c"/></svg>
<span class="t" style="left:23px;top:63.84px;color:#f1f1f1;letter-spacing:-0.460px;">Process:</span>
<div class="a" style="left:72px;top:61px;width:200px;height:22px;background:#333333;border:1px solid #424242;"></div>
<span class="t" style="left:76px;top:63.84px;color:#f1f1f1;letter-spacing:-0.425px;">[16904] S06Grid.exe</span>
<svg style="left:262px;top:70px;" width="6.4" height="3.7" viewBox="0 0 6.4 3.7"><path d="M0 0H6.4 L3.2 3.7Z" fill="#d6d6d6"/></svg>
<svg style="left:280px;top:65px;" width="14" height="13" viewBox="0 0 14 13"><rect x="0.5" y="0.5" width="13" height="12" fill="none" stroke="#5f5f5f"/><path d="M0.5 3.5 H13.5 M7.5 5 L4.5 8.5 H7 L5.5 11.5 L9.5 7.5 H7 L8.5 5 Z" fill="none" stroke="#5f5f5f" stroke-width="0.9"/></svg>
<span class="t" style="left:299px;top:63.84px;color:#5f5f5f;letter-spacing:-0.231px;">Lifecycle Events</span>
<svg style="left:387px;top:70px;" width="6.4" height="3.7" viewBox="0 0 6.4 3.7"><path d="M0 0H6.4 L3.2 3.7Z" fill="#5c5c5c"/></svg>
<span class="t" style="left:400px;top:63.84px;color:#5f5f5f;letter-spacing:-0.336px;">Thread:</span>
<div class="a" style="left:445px;top:61px;width:200px;height:22px;background:#313131;border:1px solid #3f3f3f;"></div>
<svg style="left:634px;top:70px;" width="6.4" height="3.7" viewBox="0 0 6.4 3.7"><path d="M0 0H6.4 L3.2 3.7Z" fill="#5c5c5c"/></svg>
<svg style="left:653px;top:65px;" width="13" height="14" viewBox="0 0 13 14"><path d="M0.6 0 V14" stroke="#454545" stroke-width="1.2"/><path d="M1 1 H6.5 V2.5 H11.5 V9 H6.5 V7.5 H1" fill="#2c2c2c" stroke="#454545" stroke-width="1"/></svg>
<svg style="left:674px;top:64px;" width="16" height="16" viewBox="0 0 16 16"><path d="M1.5 16 V9.5 H5 V13 H1.5 M6.5 12 V5.5 H10 V9 H6.5 M11 8 V1.5 H14.5 V5 H11" fill="#2c2c2c" stroke="#454545" stroke-width="1"/></svg>
<svg style="left:696px;top:67px;" width="16" height="10" viewBox="0 0 16 10"><path d="M0.5 2 C4 8 10 8 15 3.5 M0.5 8 C5 2 10 3 15 7.5 M15.5 1 L12.5 5.5" fill="none" stroke="#3d3d3d" stroke-width="1"/></svg>
<span class="t" style="left:717px;top:63.84px;color:#5f5f5f;letter-spacing:-0.362px;">Stack Frame:</span>
<div class="a" style="left:790px;top:61px;width:240px;height:22px;background:#313131;border:1px solid #3f3f3f;"></div>
<svg style="left:1019px;top:70px;" width="6.4" height="3.7" viewBox="0 0 6.4 3.7"><path d="M0 0H6.4 L3.2 3.7Z" fill="#5c5c5c"/></svg>
<svg style="left:1036px;top:75px;" width="7" height="7" viewBox="0 0 7 7"><rect x="0" y="-0.3" width="7" height="1.7" fill="#d6d6d6"/><path d="M0 3.2H7L3.5 6.4Z" fill="#d6d6d6"/></svg>
<!-- g_editor -->
<div class="a" style="left:0px;top:97px;width:6px;height:79px;background:#333333;"></div>
<div class="t" style="left:25.5px;top:97px;transform-origin:0 0;transform:rotate(90deg);color:#c8c8c8;letter-spacing:-0.34px">Live Visual Tree</div>
<div class="a" style="left:32px;top:97px;width:150px;height:20px;background:#333333;"></div>
<div class="a" style="left:32px;top:97px;width:150px;height:2px;background:#7865ee;"></div>
<span class="t" style="left:36px;top:99.84px;color:#ffffff;font-weight:bold;letter-spacing:-0.030px;">MainWindow.xaml</span>
<svg style="left:149px;top:103px;" width="10" height="9" viewBox="0 0 10 9"><path d="M0 4.5 H3 M3.5 1 V8 M3.5 2.5 H9.5 V6.5 H3.5 M3.5 5.5 H9.5" fill="none" stroke="#e0e0e0" stroke-width="1"/></svg>
<svg style="left:167px;top:102px;" width="10" height="10" viewBox="0 0 10 10"><path d="M0.5 0.5 L9.5 9.5 M9.5 0.5 L0.5 9.5" stroke="#e8e8e8" stroke-width="1.3"/></svg>
<div class="a" style="left:183px;top:98px;width:161px;height:19px;background:#2b2b2b;"></div>
<span class="t" style="left:187px;top:98.84px;color:#c0c0c0;letter-spacing:0.110px;">MainWindow.xaml.cs</span>
<div class="a" style="left:32px;top:117px;width:1543px;height:2px;background:#7865ee;"></div>
<svg style="left:1547px;top:106px;" width="8" height="4.5" viewBox="0 0 8 4.5"><path d="M0 0H8 L4 4.5Z" fill="#d6d6d6"/></svg>
<svg style="left:1563.5px;top:101.5px;" width="10.8" height="10.8" viewBox="0 0 12 12"><path d="M9.60 6.00 L11.60 6.00 M8.55 8.55 L9.96 9.96 M6.00 9.60 L6.00 11.60 M3.45 8.55 L2.04 9.96 M2.40 6.00 L0.40 6.00 M3.45 3.45 L2.04 2.04 M6.00 2.40 L6.00 0.40 M8.55 3.45 L9.96 2.04 " stroke="#d0d0d0" stroke-width="2"/><circle cx="6" cy="6" r="3" fill="none" stroke="#d0d0d0" stroke-width="2"/></svg>
<div class="a" style="left:32px;top:119px;width:1465px;height:21px;background:#383838;"></div>
<div class="a" style="left:765px;top:119px;width:1px;height:21px;background:#2a2a2a;"></div>
<svg style="left:36px;top:124px;" width="14" height="10" viewBox="0 0 14 10"><rect x="0.5" y="0.5" width="13" height="9" fill="none" stroke="#e0e0e0" stroke-width="1"/><path d="M5 2.6 L2.8 5 L5 7.4 M9 2.6 L11.2 5 L9 7.4" fill="none" stroke="#e0e0e0" stroke-width="1"/></svg>
<span class="t" style="left:53.5px;top:121.84px;color:#f1f1f1;letter-spacing:-0.292px;">Grid</span>
<svg style="left:769px;top:124px;" width="14" height="10" viewBox="0 0 14 10"><rect x="0.5" y="0.5" width="13" height="9" fill="none" stroke="#e0e0e0" stroke-width="1"/><path d="M5 2.6 L2.8 5 L5 7.4 M9 2.6 L11.2 5 L9 7.4" fill="none" stroke="#e0e0e0" stroke-width="1"/></svg>
<span class="t" style="left:786.5px;top:121.84px;color:#f1f1f1;letter-spacing:-0.292px;">Grid</span>
<svg style="left:752px;top:128px;" width="7" height="4" viewBox="0 0 7 4"><path d="M0 0H7 L3.5 4Z" fill="#d6d6d6"/></svg>
<svg style="left:1486px;top:128px;" width="7" height="4" viewBox="0 0 7 4"><path d="M0 0H7 L3.5 4Z" fill="#d6d6d6"/></svg>
<div class="a" style="left:1497px;top:119px;width:79px;height:21px;background:#303030;"></div>
<svg style="left:1529px;top:123px;" width="13" height="14" viewBox="0 0 13 14"><path d="M0 5.5 H13 M0 8.5 H13 M6.5 5.5 V1 M6.5 8.5 V13 M4 3 L6.5 0.5 L9 3 M4 11 L6.5 13.5 L9 11" fill="none" stroke="#e8e8e8" stroke-width="1.2"/></svg>
<div class="a" style="left:1497px;top:141px;width:79px;height:17px;background:#2e2e2e;"></div>
<svg style="left:1529px;top:143px;" width="13" height="12" viewBox="0 0 13 12"><path d="M6.5 0.6 L12.6 11.4 H0.4 Z" fill="#ffcc00" stroke="#ffcc00" stroke-width="0.8" stroke-linejoin="round"/><rect x="5.9" y="4" width="1.3" height="4" fill="#000"/><rect x="5.9" y="9" width="1.3" height="1.3" fill="#000"/></svg>
<div class="a" style="left:32px;top:140px;width:1464px;height:657px;background:#1e1e1e;overflow:hidden"><div class="a" style="left:0px;top:0px;width:25px;height:657px;background:#333333;"></div><div class="ln" style="top:-10.92px">25</div><div class="ln" style="top:13.90px">26</div><div class="ln" style="top:38.72px">27</div><div class="ln" style="top:63.54px">28</div><div class="ln" style="top:88.36px">29</div><div class="ln" style="top:113.18px">30</div><div class="ln" style="top:138.00px">31</div><div class="ln" style="top:162.82px">32</div><div class="ln" style="top:187.64px">33</div><div class="ln" style="top:212.46px">34</div><div class="ln" style="top:237.28px">35</div><div class="ln" style="top:262.10px">36</div><div class="ln" style="top:286.92px">37</div><div class="ln" style="top:311.74px">38</div><div class="ln" style="top:336.56px">39</div><div class="ln" style="top:361.38px">40</div><div class="ln" style="top:386.20px">41</div><div class="ln" style="top:411.02px">42</div><div class="ln" style="top:435.84px">43</div><div class="ln" style="top:460.66px">44</div><div class="ln" style="top:485.48px">45</div><div class="ln" style="top:510.30px">46</div><div class="ln" style="top:535.12px">47</div><div class="ln" style="top:559.94px">48</div><div class="ln" style="top:584.76px">49</div><div class="ln" style="top:609.58px">50</div><div class="ln cur" style="top:634.40px">51</div><div class="a" style="left:101px;top:0px;width:8px;height:657px;background:#57b05a;"></div><div class="a" style="left:118.3px;top:0px;width:1.9px;height:657px;background:#b0b0b0;"></div><div class="a" style="left:119px;top:85.4px;width:6.5px;height:1.5px;background:#b0b0b0;"></div><div class="a gd" style="left:131.45px;top:0px;height:657px;background-position:0 -0.3px"></div><div class="a gd" style="left:176.15px;top:0px;height:657px;background-position:0 4.1px"></div><div class="a gd" style="left:220.55px;top:0px;height:43px;background-position:0 -0.3px"></div><div class="a" style="left:126px;top:634px;width:1336px;height:22px;border:2px solid #464646;"></div><div class="cl" style="top:-10.75px">            <span class="cp">&lt;</span><span class="ce">RowDefinition</span> <span class="cn">Height</span><span class="cp">=</span><span class="cq">"</span><span class="cv">*</span><span class="cq">"</span><span class="cp">&gt;</span><span class="cp">&lt;/</span><span class="ce">RowDefinition</span><span class="cp">&gt;</span></div><div class="cl" style="top:14.07px">            <span class="cp">&lt;</span><span class="ce">RowDefinition</span> <span class="cn">Height</span><span class="cp">=</span><span class="cq">"</span><span class="cv">*</span><span class="cq">"</span><span class="cp">&gt;</span><span class="cp">&lt;/</span><span class="ce">RowDefinition</span><span class="cp">&gt;</span></div><div class="cl" style="top:511.07px">        <span class="cp">&lt;</span><span class="ce">Button</span> <span class="cn">Grid.Column</span><span class="cp">=</span><span class="cq">"</span><span class="cv">0</span><span class="cq">"</span> <span class="cn">Grid.Row</span><span class="cp">=</span><span class="cq">"</span><span class="cv">3</span><span class="cq">"</span> <span class="cp">&gt;</span><span class="cx"><span class="sq">Butó<svg width="46" height="6" viewBox="0 0 46 6" style="left:0;top:17.6px"><path d="M0.00 2.92 L0.50 2.46 L1.00 2.05 L1.50 1.74 L2.00 1.55 L2.50 1.50 L3.00 1.61 L3.50 1.85 L4.00 2.20 L4.50 2.64 L5.00 3.11 L5.50 3.57 L6.00 3.97 L6.50 4.28 L7.00 4.46 L7.50 4.50 L8.00 4.38 L8.50 4.14 L9.00 3.78 L9.50 3.34 L10.00 2.87 L10.50 2.41 L11.00 2.01 L11.50 1.71 L12.00 1.54 L12.50 1.51 L13.00 1.62 L13.50 1.88 L14.00 2.24 L14.50 2.68 L15.00 3.15 L15.50 3.61 L16.00 4.00 L16.50 4.30 L17.00 4.47 L17.50 4.49 L18.00 4.37 L18.50 4.11 L19.00 3.74 L19.50 3.29 L20.00 2.82 L20.50 2.37 L21.00 1.98 L21.50 1.69 L22.00 1.53 L22.50 1.51 L23.00 1.64 L23.50 1.91 L24.00 2.28 L24.50 2.73 L25.00 3.20 L25.50 3.65 L26.00 4.04 L26.50 4.32 L27.00 4.48 L27.50 4.48 L28.00 4.35 L28.50 4.07 L29.00 3.69 L29.50 3.25 L30.00 2.78 L30.50 2.33 L31.00 1.94 L31.50 1.67 L32.00 1.52 L32.50 1.52 L33.00 1.67 L33.50 1.94 L34.00 2.33 L34.50 2.78 L35.00 3.25 L35.50 3.69 L36.00 4.07 L36.50 4.35 L37.00 4.48 L37.50 4.48 L38.00 4.32 L38.50 4.04 L39.00 3.65 L39.50 3.20 L40.00 2.73 L40.50 2.28 L41.00 1.91 L41.50 1.64 L42.00 1.51 L42.50 1.53 L43.00 1.69 L43.50 1.98 L44.00 2.37 L44.50 2.82 L45.00 3.29 L45.50 3.74 L46.00 4.11" fill="none" stroke="#0be00b" stroke-width="1.55" stroke-linecap="round"/></svg></span> 13</span><span class="cp">&lt;/</span><span class="ce">Button</span><span class="cp">&gt;</span></div><div class="cl" style="top:535.29px">        <span class="cp">&lt;</span><span class="ce">Button</span> <span class="cn">Grid.Column</span><span class="cp">=</span><span class="cq">"</span><span class="cv">1</span><span class="cq">"</span> <span class="cn">Grid.Row</span><span class="cp">=</span><span class="cq">"</span><span class="cv">3</span><span class="cq">"</span> <span class="cp">&gt;</span><span class="cx"><span class="sq">Butó<svg width="46" height="6" viewBox="0 0 46 6" style="left:0;top:17.6px"><path d="M0.00 2.92 L0.50 2.46 L1.00 2.05 L1.50 1.74 L2.00 1.55 L2.50 1.50 L3.00 1.61 L3.50 1.85 L4.00 2.20 L4.50 2.64 L5.00 3.11 L5.50 3.57 L6.00 3.97 L6.50 4.28 L7.00 4.46 L7.50 4.50 L8.00 4.38 L8.50 4.14 L9.00 3.78 L9.50 3.34 L10.00 2.87 L10.50 2.41 L11.00 2.01 L11.50 1.71 L12.00 1.54 L12.50 1.51 L13.00 1.62 L13.50 1.88 L14.00 2.24 L14.50 2.68 L15.00 3.15 L15.50 3.61 L16.00 4.00 L16.50 4.30 L17.00 4.47 L17.50 4.49 L18.00 4.37 L18.50 4.11 L19.00 3.74 L19.50 3.29 L20.00 2.82 L20.50 2.37 L21.00 1.98 L21.50 1.69 L22.00 1.53 L22.50 1.51 L23.00 1.64 L23.50 1.91 L24.00 2.28 L24.50 2.73 L25.00 3.20 L25.50 3.65 L26.00 4.04 L26.50 4.32 L27.00 4.48 L27.50 4.48 L28.00 4.35 L28.50 4.07 L29.00 3.69 L29.50 3.25 L30.00 2.78 L30.50 2.33 L31.00 1.94 L31.50 1.67 L32.00 1.52 L32.50 1.52 L33.00 1.67 L33.50 1.94 L34.00 2.33 L34.50 2.78 L35.00 3.25 L35.50 3.69 L36.00 4.07 L36.50 4.35 L37.00 4.48 L37.50 4.48 L38.00 4.32 L38.50 4.04 L39.00 3.65 L39.50 3.20 L40.00 2.73 L40.50 2.28 L41.00 1.91 L41.50 1.64 L42.00 1.51 L42.50 1.53 L43.00 1.69 L43.50 1.98 L44.00 2.37 L44.50 2.82 L45.00 3.29 L45.50 3.74 L46.00 4.11" fill="none" stroke="#0be00b" stroke-width="1.55" stroke-linecap="round"/></svg></span> 14</span><span class="cp">&lt;/</span><span class="ce">Button</span><span class="cp">&gt;</span></div><div class="cl" style="top:560.11px">        <span class="cp">&lt;</span><span class="ce">Button</span> <span class="cn">Grid.Column</span><span class="cp">=</span><span class="cq">"</span><span class="cv">2</span><span class="cq">"</span> <span class="cn">Grid.Row</span><span class="cp">=</span><span class="cq">"</span><span class="cv">3</span><span class="cq">"</span> <span class="cp">&gt;</span><span class="cx"><span class="sq">Butó<svg width="46" height="6" viewBox="0 0 46 6" style="left:0;top:17.6px"><path d="M0.00 2.92 L0.50 2.46 L1.00 2.05 L1.50 1.74 L2.00 1.55 L2.50 1.50 L3.00 1.61 L3.50 1.85 L4.00 2.20 L4.50 2.64 L5.00 3.11 L5.50 3.57 L6.00 3.97 L6.50 4.28 L7.00 4.46 L7.50 4.50 L8.00 4.38 L8.50 4.14 L9.00 3.78 L9.50 3.34 L10.00 2.87 L10.50 2.41 L11.00 2.01 L11.50 1.71 L12.00 1.54 L12.50 1.51 L13.00 1.62 L13.50 1.88 L14.00 2.24 L14.50 2.68 L15.00 3.15 L15.50 3.61 L16.00 4.00 L16.50 4.30 L17.00 4.47 L17.50 4.49 L18.00 4.37 L18.50 4.11 L19.00 3.74 L19.50 3.29 L20.00 2.82 L20.50 2.37 L21.00 1.98 L21.50 1.69 L22.00 1.53 L22.50 1.51 L23.00 1.64 L23.50 1.91 L24.00 2.28 L24.50 2.73 L25.00 3.20 L25.50 3.65 L26.00 4.04 L26.50 4.32 L27.00 4.48 L27.50 4.48 L28.00 4.35 L28.50 4.07 L29.00 3.69 L29.50 3.25 L30.00 2.78 L30.50 2.33 L31.00 1.94 L31.50 1.67 L32.00 1.52 L32.50 1.52 L33.00 1.67 L33.50 1.94 L34.00 2.33 L34.50 2.78 L35.00 3.25 L35.50 3.69 L36.00 4.07 L36.50 4.35 L37.00 4.48 L37.50 4.48 L38.00 4.32 L38.50 4.04 L39.00 3.65 L39.50 3.20 L40.00 2.73 L40.50 2.28 L41.00 1.91 L41.50 1.64 L42.00 1.51 L42.50 1.53 L43.00 1.69 L43.50 1.98 L44.00 2.37 L44.50 2.82 L45.00 3.29 L45.50 3.74 L46.00 4.11" fill="none" stroke="#0be00b" stroke-width="1.55" stroke-linecap="round"/></svg></span> 15</span><span class="cp">&lt;/</span><span class="ce">Button</span><span class="cp">&gt;</span></div><div class="cl" style="top:584.93px">        <span class="cp">&lt;</span><span class="ce">Button</span> <span class="cn">Grid.Column</span><span class="cp">=</span><span class="cq">"</span><span class="cv">3</span><span class="cq">"</span> <span class="cn">Grid.Row</span><span class="cp">=</span><span class="cq">"</span><span class="cv">3</span><span class="cq">"</span> <span class="cp">&gt;</span><span class="cx"><span class="sq">Butó<svg width="46" height="6" viewBox="0 0 46 6" style="left:0;top:17.6px"><path d="M0.00 2.92 L0.50 2.46 L1.00 2.05 L1.50 1.74 L2.00 1.55 L2.50 1.50 L3.00 1.61 L3.50 1.85 L4.00 2.20 L4.50 2.64 L5.00 3.11 L5.50 3.57 L6.00 3.97 L6.50 4.28 L7.00 4.46 L7.50 4.50 L8.00 4.38 L8.50 4.14 L9.00 3.78 L9.50 3.34 L10.00 2.87 L10.50 2.41 L11.00 2.01 L11.50 1.71 L12.00 1.54 L12.50 1.51 L13.00 1.62 L13.50 1.88 L14.00 2.24 L14.50 2.68 L15.00 3.15 L15.50 3.61 L16.00 4.00 L16.50 4.30 L17.00 4.47 L17.50 4.49 L18.00 4.37 L18.50 4.11 L19.00 3.74 L19.50 3.29 L20.00 2.82 L20.50 2.37 L21.00 1.98 L21.50 1.69 L22.00 1.53 L22.50 1.51 L23.00 1.64 L23.50 1.91 L24.00 2.28 L24.50 2.73 L25.00 3.20 L25.50 3.65 L26.00 4.04 L26.50 4.32 L27.00 4.48 L27.50 4.48 L28.00 4.35 L28.50 4.07 L29.00 3.69 L29.50 3.25 L30.00 2.78 L30.50 2.33 L31.00 1.94 L31.50 1.67 L32.00 1.52 L32.50 1.52 L33.00 1.67 L33.50 1.94 L34.00 2.33 L34.50 2.78 L35.00 3.25 L35.50 3.69 L36.00 4.07 L36.50 4.35 L37.00 4.48 L37.50 4.48 L38.00 4.32 L38.50 4.04 L39.00 3.65 L39.50 3.20 L40.00 2.73 L40.50 2.28 L41.00 1.91 L41.50 1.64 L42.00 1.51 L42.50 1.53 L43.00 1.69 L43.50 1.98 L44.00 2.37 L44.50 2.82 L45.00 3.29 L45.50 3.74 L46.00 4.11" fill="none" stroke="#0be00b" stroke-width="1.55" stroke-linecap="round"/></svg></span> 16</span><span class="cp">&lt;/</span><span class="ce">Button</span><span class="cp">&gt;</span></div></div>
<div class="a" style="left:32px;top:139px;width:1465px;height:2px;background:#454545;"></div>
<svg style="left:1496px;top:158px;" width="80" height="640" viewBox="0 0 80 640"><rect x="0" y="0" width="80" height="640" fill="#3f3f46"/><rect x="1" y="63" width="4.6" height="356" fill="#57b05a"/><rect x="5.9" y="191.6" width="73" height="191" rx="1.5" fill="#000" stroke="#6e6e6e" stroke-width="0.8"/><rect x="0" y="382" width="80" height="2" fill="#e8e8e8"/><path d="M34 10.3 L39.3 5 L44.6 10.3 Z" fill="#b4b4b4"/><path d="M34 626 L39.3 631.3 L44.6 626 Z" fill="#b4b4b4"/><rect x="69" y="54" width="10" height="1.6" fill="#d68a00"/><rect x="11.20" y="17.70" width="0.55" height="2" fill="#8a8a8a" opacity="0.55"/><rect x="11.75" y="17.70" width="3.30" height="2" fill="#dcdcdc" opacity="0.55"/><rect x="15.60" y="17.70" width="3.85" height="2" fill="#79aedb" opacity="0.55"/><rect x="19.45" y="17.70" width="0.55" height="2" fill="#8a8a8a" opacity="0.55"/><rect x="20.00" y="17.70" width="0.55" height="2" fill="#79aedb" opacity="0.55"/><rect x="20.55" y="17.70" width="9.90" height="2" fill="#4f8fcf" opacity="0.55"/><rect x="30.45" y="17.70" width="0.55" height="2" fill="#79aedb" opacity="0.55"/><rect x="15.60" y="25.00" width="2.75" height="2" fill="#4a90d9" opacity="0.55"/><rect x="18.35" y="25.00" width="0.55" height="2" fill="#4a90d9" opacity="0.55"/><rect x="18.90" y="25.00" width="0.55" height="2" fill="#4a90d9" opacity="0.55"/><rect x="19.45" y="25.00" width="31.35" height="2" fill="#4a90d9" opacity="0.55"/><rect x="50.80" y="25.00" width="0.55" height="2" fill="#4a90d9" opacity="0.55"/><rect x="15.60" y="32.30" width="3.85" height="2" fill="#4a90d9" opacity="0.55"/><rect x="19.45" y="32.30" width="0.55" height="2" fill="#4a90d9" opacity="0.55"/><rect x="20.00" y="32.30" width="0.55" height="2" fill="#4a90d9" opacity="0.55"/><rect x="20.55" y="32.30" width="24.20" height="2" fill="#4a90d9" opacity="0.55"/><rect x="44.75" y="32.30" width="0.55" height="2" fill="#4a90d9" opacity="0.55"/><rect x="15.60" y="39.60" width="3.85" height="2" fill="#4a90d9" opacity="0.55"/><rect x="19.45" y="39.60" width="0.55" height="2" fill="#4a90d9" opacity="0.55"/><rect x="20.00" y="39.60" width="0.55" height="2" fill="#4a90d9" opacity="0.55"/><rect x="20.55" y="39.60" width="27.50" height="2" fill="#4a90d9" opacity="0.55"/><rect x="48.05" y="39.60" width="0.55" height="2" fill="#4a90d9" opacity="0.55"/><rect x="15.60" y="46.90" width="4.40" height="2" fill="#4a90d9" opacity="0.55"/><rect x="20.00" y="46.90" width="0.55" height="2" fill="#4a90d9" opacity="0.55"/><rect x="20.55" y="46.90" width="0.55" height="2" fill="#4a90d9" opacity="0.55"/><rect x="21.10" y="46.90" width="32.45" height="2" fill="#4a90d9" opacity="0.55"/><rect x="53.55" y="46.90" width="0.55" height="2" fill="#4a90d9" opacity="0.55"/><rect x="15.60" y="54.20" width="6.05" height="2" fill="#5d7f9e" opacity="0.55"/><rect x="21.65" y="54.20" width="0.55" height="2" fill="#5d7f9e" opacity="0.55"/><rect x="22.20" y="54.20" width="0.55" height="2" fill="#5d7f9e" opacity="0.55"/><rect x="22.75" y="54.20" width="11.55" height="2" fill="#5d7f9e" opacity="0.55"/><rect x="34.30" y="54.20" width="0.55" height="2" fill="#5d7f9e" opacity="0.55"/><rect x="15.60" y="61.50" width="6.60" height="2" fill="#79aedb" opacity="0.55"/><rect x="22.20" y="61.50" width="0.55" height="2" fill="#8a8a8a" opacity="0.55"/><rect x="22.75" y="61.50" width="0.55" height="2" fill="#79aedb" opacity="0.55"/><rect x="23.30" y="61.50" width="0.55" height="2" fill="#4f8fcf" opacity="0.55"/><rect x="23.85" y="61.50" width="0.55" height="2" fill="#79aedb" opacity="0.55"/><rect x="15.60" y="68.80" width="2.75" height="2" fill="#79aedb" opacity="0.55"/><rect x="18.35" y="68.80" width="0.55" height="2" fill="#8a8a8a" opacity="0.55"/><rect x="18.90" y="68.80" width="0.55" height="2" fill="#79aedb" opacity="0.55"/><rect x="19.45" y="68.80" width="5.50" height="2" fill="#4f8fcf" opacity="0.55"/><rect x="24.95" y="68.80" width="0.55" height="2" fill="#79aedb" opacity="0.55"/><rect x="26.05" y="68.80" width="3.30" height="2" fill="#79aedb" opacity="0.55"/><rect x="29.35" y="68.80" width="0.55" height="2" fill="#8a8a8a" opacity="0.55"/><rect x="29.90" y="68.80" width="0.55" height="2" fill="#79aedb" opacity="0.55"/><rect x="30.45" y="68.80" width="1.65" height="2" fill="#4f8fcf" opacity="0.55"/><rect x="32.10" y="68.80" width="0.55" height="2" fill="#79aedb" opacity="0.55"/><rect x="33.20" y="68.80" width="2.75" height="2" fill="#79aedb" opacity="0.55"/><rect x="35.95" y="68.80" width="0.55" height="2" fill="#8a8a8a" opacity="0.55"/><rect x="36.50" y="68.80" width="0.55" height="2" fill="#79aedb" opacity="0.55"/><rect x="37.05" y="68.80" width="1.65" height="2" fill="#4f8fcf" opacity="0.55"/><rect x="38.70" y="68.80" width="0.55" height="2" fill="#79aedb" opacity="0.55"/><rect x="39.25" y="68.80" width="0.55" height="2" fill="#8a8a8a" opacity="0.55"/><rect x="13.40" y="83.40" width="0.55" height="2" fill="#8a8a8a" opacity="0.55"/><rect x="13.95" y="83.40" width="2.20" height="2" fill="#dcdcdc" opacity="0.55"/><rect x="16.15" y="83.40" width="0.55" height="2" fill="#8a8a8a" opacity="0.55"/><rect x="15.60" y="98.00" width="0.55" height="2" fill="#8a8a8a" opacity="0.55"/><rect x="16.15" y="98.00" width="12.10" height="2" fill="#dcdcdc" opacity="0.55"/><rect x="28.25" y="98.00" width="0.55" height="2" fill="#8a8a8a" opacity="0.55"/><rect x="17.80" y="112.60" width="0.55" height="2" fill="#8a8a8a" opacity="0.55"/><rect x="18.35" y="112.60" width="8.80" height="2" fill="#dcdcdc" opacity="0.55"/><rect x="27.70" y="112.60" width="2.75" height="2" fill="#79aedb" opacity="0.55"/><rect x="30.45" y="112.60" width="0.55" height="2" fill="#8a8a8a" opacity="0.55"/><rect x="31.00" y="112.60" width="0.55" height="2" fill="#79aedb" opacity="0.55"/><rect x="31.55" y="112.60" width="0.55" height="2" fill="#4f8fcf" opacity="0.55"/><rect x="32.10" y="112.60" width="0.55" height="2" fill="#79aedb" opacity="0.55"/><rect x="32.65" y="112.60" width="0.55" height="2" fill="#8a8a8a" opacity="0.55"/><rect x="33.20" y="112.60" width="1.10" height="2" fill="#8a8a8a" opacity="0.55"/><rect x="34.30" y="112.60" width="8.80" height="2" fill="#dcdcdc" opacity="0.55"/><rect x="43.10" y="112.60" width="0.55" height="2" fill="#8a8a8a" opacity="0.55"/><rect x="17.80" y="119.90" width="0.55" height="2" fill="#8a8a8a" opacity="0.55"/><rect x="18.35" y="119.90" width="8.80" height="2" fill="#dcdcdc" opacity="0.55"/><rect x="27.70" y="119.90" width="2.75" height="2" fill="#79aedb" opacity="0.55"/><rect x="30.45" y="119.90" width="0.55" height="2" fill="#8a8a8a" opacity="0.55"/><rect x="31.00" y="119.90" width="0.55" height="2" fill="#79aedb" opacity="0.55"/><rect x="31.55" y="119.90" width="0.55" height="2" fill="#4f8fcf" opacity="0.55"/><rect x="32.10" y="119.90" width="0.55" height="2" fill="#79aedb" opacity="0.55"/><rect x="32.65" y="119.90" width="0.55" height="2" fill="#8a8a8a" opacity="0.55"/><rect x="33.20" y="119.90" width="1.10" height="2" fill="#8a8a8a" opacity="0.55"/><rect x="34.30" y="119.90" width="8.80" height="2" fill="#dcdcdc" opacity="0.55"/><rect x="43.10" y="119.90" width="0.55" height="2" fill="#8a8a8a" opacity="0.55"/><rect x="17.80" y="127.20" width="0.55" height="2" fill="#8a8a8a" opacity="0.55"/><rect x="18.35" y="127.20" width="8.80" height="2" fill="#dcdcdc" opacity="0.55"/><rect x="27.70" y="127.20" width="2.75" height="2" fill="#79aedb" opacity="0.55"/><rect x="30.45" y="127.20" width="0.55" height="2" fill="#8a8a8a" opacity="0.55"/><rect x="31.00" y="127.20" width="0.55" height="2" fill="#79aedb" opacity="0.55"/><rect x="31.55" y="127.20" width="0.55" height="2" fill="#4f8fcf" opacity="0.55"/><rect x="32.10" y="127.20" width="0.55" height="2" fill="#79aedb" opacity="0.55"/><rect x="32.65" y="127.20" width="0.55" height="2" fill="#8a8a8a" opacity="0.55"/><rect x="33.20" y="127.20" width="1.10" height="2" fill="#8a8a8a" opacity="0.55"/><rect x="34.30" y="127.20" width="8.80" height="2" fill="#dcdcdc" opacity="0.55"/><rect x="43.10" y="127.20" width="0.55" height="2" fill="#8a8a8a" opacity="0.55"/><rect x="17.80" y="134.50" width="0.55" height="2" fill="#8a8a8a" opacity="0.55"/><rect x="18.35" y="134.50" width="8.80" height="2" fill="#dcdcdc" opacity="0.55"/><rect x="27.70" y="134.50" width="2.75" height="2" fill="#79aedb" opacity="0.55"/><rect x="30.45" y="134.50" width="0.55" height="2" fill="#8a8a8a" opacity="0.55"/><rect x="31.00" y="134.50" width="0.55" height="2" fill="#79aedb" opacity="0.55"/><rect x="31.55" y="134.50" width="0.55" height="2" fill="#4f8fcf" opacity="0.55"/><rect x="32.10" y="134.50" width="0.55" height="2" fill="#79aedb" opacity="0.55"/><rect x="32.65" y="134.50" width="0.55" height="2" fill="#8a8a8a" opacity="0.55"/><rect x="33.20" y="134.50" width="1.10" height="2" fill="#8a8a8a" opacity="0.55"/><rect x="34.30" y="134.50" width="8.80" height="2" fill="#dcdcdc" opacity="0.55"/><rect x="43.10" y="134.50" width="0.55" height="2" fill="#8a8a8a" opacity="0.55"/><rect x="15.60" y="149.10" width="1.10" height="2" fill="#8a8a8a" opacity="0.55"/><rect x="16.70" y="149.10" width="12.10" height="2" fill="#dcdcdc" opacity="0.55"/><rect x="28.80" y="149.10" width="0.55" height="2" fill="#8a8a8a" opacity="0.55"/><rect x="15.60" y="163.70" width="0.55" height="2" fill="#8a8a8a" opacity="0.55"/><rect x="16.15" y="163.70" width="10.45" height="2" fill="#dcdcdc" opacity="0.55"/><rect x="26.60" y="163.70" width="0.55" height="2" fill="#8a8a8a" opacity="0.55"/><rect x="17.80" y="178.30" width="0.55" height="2" fill="#8a8a8a" opacity="0.55"/><rect x="18.35" y="178.30" width="7.15" height="2" fill="#dcdcdc" opacity="0.55"/><rect x="26.05" y="178.30" width="3.30" height="2" fill="#79aedb" opacity="0.55"/><rect x="29.35" y="178.30" width="0.55" height="2" fill="#8a8a8a" opacity="0.55"/><rect x="29.90" y="178.30" width="0.55" height="2" fill="#79aedb" opacity="0.55"/><rect x="30.45" y="178.30" width="0.55" height="2" fill="#4f8fcf" opacity="0.55"/><rect x="31.00" y="178.30" width="0.55" height="2" fill="#79aedb" opacity="0.55"/><rect x="31.55" y="178.30" width="0.55" height="2" fill="#8a8a8a" opacity="0.55"/><rect x="32.10" y="178.30" width="1.10" height="2" fill="#8a8a8a" opacity="0.55"/><rect x="33.20" y="178.30" width="7.15" height="2" fill="#dcdcdc" opacity="0.55"/><rect x="40.35" y="178.30" width="0.55" height="2" fill="#8a8a8a" opacity="0.55"/><rect x="17.80" y="185.60" width="0.55" height="2" fill="#8a8a8a" opacity="0.55"/><rect x="18.35" y="185.60" width="7.15" height="2" fill="#dcdcdc" opacity="0.55"/><rect x="26.05" y="185.60" width="3.30" height="2" fill="#79aedb" opacity="0.55"/><rect x="29.35" y="185.60" width="0.55" height="2" fill="#8a8a8a" opacity="0.55"/><rect x="29.90" y="185.60" width="0.55" height="2" fill="#79aedb" opacity="0.55"/><rect x="30.45" y="185.60" width="0.55" height="2" fill="#4f8fcf" opacity="0.55"/><rect x="31.00" y="185.60" width="0.55" height="2" fill="#79aedb" opacity="0.55"/><rect x="31.55" y="185.60" width="0.55" height="2" fill="#8a8a8a" opacity="0.55"/><rect x="32.10" y="185.60" width="1.10" height="2" fill="#8a8a8a" opacity="0.55"/><rect x="33.20" y="185.60" width="7.15" height="2" fill="#dcdcdc" opacity="0.55"/><rect x="40.35" y="185.60" width="0.55" height="2" fill="#8a8a8a" opacity="0.55"/><rect x="17.80" y="192.90" width="0.55" height="2" fill="#8a8a8a" opacity="0.75"/><rect x="18.35" y="192.90" width="7.15" height="2" fill="#dcdcdc" opacity="0.75"/><rect x="26.05" y="192.90" width="3.30" height="2" fill="#79aedb" opacity="0.75"/><rect x="29.35" y="192.90" width="0.55" height="2" fill="#8a8a8a" opacity="0.75"/><rect x="29.90" y="192.90" width="0.55" height="2" fill="#79aedb" opacity="0.75"/><rect x="30.45" y="192.90" width="0.55" height="2" fill="#4f8fcf" opacity="0.75"/><rect x="31.00" y="192.90" width="0.55" height="2" fill="#79aedb" opacity="0.75"/><rect x="31.55" y="192.90" width="0.55" height="2" fill="#8a8a8a" opacity="0.75"/><rect x="32.10" y="192.90" width="1.10" height="2" fill="#8a8a8a" opacity="0.75"/><rect x="33.20" y="192.90" width="7.15" height="2" fill="#dcdcdc" opacity="0.75"/><rect x="40.35" y="192.90" width="0.55" height="2" fill="#8a8a8a" opacity="0.75"/><rect x="17.80" y="200.20" width="0.55" height="2" fill="#8a8a8a" opacity="0.75"/><rect x="18.35" y="200.20" width="7.15" height="2" fill="#dcdcdc" opacity="0.75"/><rect x="26.05" y="200.20" width="3.30" height="2" fill="#79aedb" opacity="0.75"/><rect x="29.35" y="200.20" width="0.55" height="2" fill="#8a8a8a" opacity="0.75"/><rect x="29.90" y="200.20" width="0.55" height="2" fill="#79aedb" opacity="0.75"/><rect x="30.45" y="200.20" width="0.55" height="2" fill="#4f8fcf" opacity="0.75"/><rect x="31.00" y="200.20" width="0.55" height="2" fill="#79aedb" opacity="0.75"/><rect x="31.55" y="200.20" width="0.55" height="2" fill="#8a8a8a" opacity="0.75"/><rect x="32.10" y="200.20" width="1.10" height="2" fill="#8a8a8a" opacity="0.75"/><rect x="33.20" y="200.20" width="7.15" height="2" fill="#dcdcdc" opacity="0.75"/><rect x="40.35" y="200.20" width="0.55" height="2" fill="#8a8a8a" opacity="0.75"/><rect x="15.60" y="214.80" width="1.10" height="2" fill="#8a8a8a" opacity="0.75"/><rect x="16.70" y="214.80" width="10.45" height="2" fill="#dcdcdc" opacity="0.75"/><rect x="27.15" y="214.80" width="0.55" height="2" fill="#8a8a8a" opacity="0.75"/><rect x="15.60" y="236.70" width="0.55" height="2" fill="#8a8a8a" opacity="0.75"/><rect x="16.15" y="236.70" width="3.30" height="2" fill="#dcdcdc" opacity="0.75"/><rect x="20.00" y="236.70" width="6.05" height="2" fill="#79aedb" opacity="0.75"/><rect x="26.05" y="236.70" width="0.55" height="2" fill="#8a8a8a" opacity="0.75"/><rect x="26.60" y="236.70" width="0.55" height="2" fill="#79aedb" opacity="0.75"/><rect x="27.15" y="236.70" width="0.55" height="2" fill="#4f8fcf" opacity="0.75"/><rect x="27.70" y="236.70" width="0.55" height="2" fill="#79aedb" opacity="0.75"/><rect x="28.80" y="236.70" width="4.40" height="2" fill="#79aedb" opacity="0.75"/><rect x="33.20" y="236.70" width="0.55" height="2" fill="#8a8a8a" opacity="0.75"/><rect x="33.75" y="236.70" width="0.55" height="2" fill="#79aedb" opacity="0.75"/><rect x="34.30" y="236.70" width="0.55" height="2" fill="#4f8fcf" opacity="0.75"/><rect x="34.85" y="236.70" width="0.55" height="2" fill="#79aedb" opacity="0.75"/><rect x="35.95" y="236.70" width="0.55" height="2" fill="#8a8a8a" opacity="0.75"/><rect x="36.50" y="236.70" width="3.30" height="2" fill="#bdbdbd" opacity="0.75"/><rect x="39.80" y="236.70" width="1.10" height="2" fill="#8a8a8a" opacity="0.75"/><rect x="40.90" y="236.70" width="3.30" height="2" fill="#dcdcdc" opacity="0.75"/><rect x="44.20" y="236.70" width="0.55" height="2" fill="#8a8a8a" opacity="0.75"/><rect x="15.60" y="244.00" width="0.55" height="2" fill="#8a8a8a" opacity="0.75"/><rect x="16.15" y="244.00" width="3.30" height="2" fill="#dcdcdc" opacity="0.75"/><rect x="20.00" y="244.00" width="6.05" height="2" fill="#79aedb" opacity="0.75"/><rect x="26.05" y="244.00" width="0.55" height="2" fill="#8a8a8a" opacity="0.75"/><rect x="26.60" y="244.00" width="0.55" height="2" fill="#79aedb" opacity="0.75"/><rect x="27.15" y="244.00" width="0.55" height="2" fill="#4f8fcf" opacity="0.75"/><rect x="27.70" y="244.00" width="0.55" height="2" fill="#79aedb" opacity="0.75"/><rect x="28.80" y="244.00" width="4.40" height="2" fill="#79aedb" opacity="0.75"/><rect x="33.20" y="244.00" width="0.55" height="2" fill="#8a8a8a" opacity="0.75"/><rect x="33.75" y="244.00" width="0.55" height="2" fill="#79aedb" opacity="0.75"/><rect x="34.30" y="244.00" width="0.55" height="2" fill="#4f8fcf" opacity="0.75"/><rect x="34.85" y="244.00" width="0.55" height="2" fill="#79aedb" opacity="0.75"/><rect x="35.95" y="244.00" width="0.55" height="2" fill="#8a8a8a" opacity="0.75"/><rect x="36.50" y="244.00" width="3.30" height="2" fill="#bdbdbd" opacity="0.75"/><rect x="39.80" y="244.00" width="1.10" height="2" fill="#8a8a8a" opacity="0.75"/><rect x="40.90" y="244.00" width="3.30" height="2" fill="#dcdcdc" opacity="0.75"/><rect x="44.20" y="244.00" width="0.55" height="2" fill="#8a8a8a" opacity="0.75"/><rect x="15.60" y="251.30" width="0.55" height="2" fill="#8a8a8a" opacity="0.75"/><rect x="16.15" y="251.30" width="3.30" height="2" fill="#dcdcdc" opacity="0.75"/><rect x="20.00" y="251.30" width="6.05" height="2" fill="#79aedb" opacity="0.75"/><rect x="26.05" y="251.30" width="0.55" height="2" fill="#8a8a8a" opacity="0.75"/><rect x="26.60" y="251.30" width="0.55" height="2" fill="#79aedb" opacity="0.75"/><rect x="27.15" y="251.30" width="0.55" height="2" fill="#4f8fcf" opacity="0.75"/><rect x="27.70" y="251.30" width="0.55" height="2" fill="#79aedb" opacity="0.75"/><rect x="28.80" y="251.30" width="4.40" height="2" fill="#79aedb" opacity="0.75"/><rect x="33.20" y="251.30" width="0.55" height="2" fill="#8a8a8a" opacity="0.75"/><rect x="33.75" y="251.30" width="0.55" height="2" fill="#79aedb" opacity="0.75"/><rect x="34.30" y="251.30" width="0.55" height="2" fill="#4f8fcf" opacity="0.75"/><rect x="34.85" y="251.30" width="0.55" height="2" fill="#79aedb" opacity="0.75"/><rect x="35.95" y="251.30" width="0.55" height="2" fill="#8a8a8a" opacity="0.75"/><rect x="36.50" y="251.30" width="3.30" height="2" fill="#bdbdbd" opacity="0.75"/><rect x="39.80" y="251.30" width="1.10" height="2" fill="#8a8a8a" opacity="0.75"/><rect x="40.90" y="251.30" width="3.30" height="2" fill="#dcdcdc" opacity="0.75"/><rect x="44.20" y="251.30" width="0.55" height="2" fill="#8a8a8a" opacity="0.75"/><rect x="15.60" y="258.60" width="0.55" height="2" fill="#8a8a8a" opacity="0.75"/><rect x="16.15" y="258.60" width="3.30" height="2" fill="#dcdcdc" opacity="0.75"/><rect x="20.00" y="258.60" width="6.05" height="2" fill="#79aedb" opacity="0.75"/><rect x="26.05" y="258.60" width="0.55" height="2" fill="#8a8a8a" opacity="0.75"/><rect x="26.60" y="258.60" width="0.55" height="2" fill="#79aedb" opacity="0.75"/><rect x="27.15" y="258.60" width="0.55" height="2" fill="#4f8fcf" opacity="0.75"/><rect x="27.70" y="258.60" width="0.55" height="2" fill="#79aedb" opacity="0.75"/><rect x="28.80" y="258.60" width="4.40" height="2" fill="#79aedb" opacity="0.75"/><rect x="33.20" y="258.60" width="0.55" height="2" fill="#8a8a8a" opacity="0.75"/><rect x="33.75" y="258.60" width="0.55" height="2" fill="#79aedb" opacity="0.75"/><rect x="34.30" y="258.60" width="0.55" height="2" fill="#4f8fcf" opacity="0.75"/><rect x="34.85" y="258.60" width="0.55" height="2" fill="#79aedb" opacity="0.75"/><rect x="35.95" y="258.60" width="0.55" height="2" fill="#8a8a8a" opacity="0.75"/><rect x="36.50" y="258.60" width="3.30" height="2" fill="#bdbdbd" opacity="0.75"/><rect x="39.80" y="258.60" width="1.10" height="2" fill="#8a8a8a" opacity="0.75"/><rect x="40.90" y="258.60" width="3.30" height="2" fill="#dcdcdc" opacity="0.75"/><rect x="44.20" y="258.60" width="0.55" height="2" fill="#8a8a8a" opacity="0.75"/><rect x="15.60" y="273.20" width="0.55" height="2" fill="#8a8a8a" opacity="0.75"/><rect x="16.15" y="273.20" width="3.30" height="2" fill="#dcdcdc" opacity="0.75"/><rect x="20.00" y="273.20" width="6.05" height="2" fill="#79aedb" opacity="0.75"/><rect x="26.05" y="273.20" width="0.55" height="2" fill="#8a8a8a" opacity="0.75"/><rect x="26.60" y="273.20" width="0.55" height="2" fill="#79aedb" opacity="0.75"/><rect x="27.15" y="273.20" width="0.55" height="2" fill="#4f8fcf" opacity="0.75"/><rect x="27.70" y="273.20" width="0.55" height="2" fill="#79aedb" opacity="0.75"/><rect x="28.80" y="273.20" width="4.40" height="2" fill="#79aedb" opacity="0.75"/><rect x="33.20" y="273.20" width="0.55" height="2" fill="#8a8a8a" opacity="0.75"/><rect x="33.75" y="273.20" width="0.55" height="2" fill="#79aedb" opacity="0.75"/><rect x="34.30" y="273.20" width="0.55" height="2" fill="#4f8fcf" opacity="0.75"/><rect x="34.85" y="273.20" width="0.55" height="2" fill="#79aedb" opacity="0.75"/><rect x="35.95" y="273.20" width="0.55" height="2" fill="#8a8a8a" opacity="0.75"/><rect x="36.50" y="273.20" width="3.30" height="2" fill="#bdbdbd" opacity="0.75"/><rect x="39.80" y="273.20" width="1.10" height="2" fill="#8a8a8a" opacity="0.75"/><rect x="40.90" y="273.20" width="3.30" height="2" fill="#dcdcdc" opacity="0.75"/><rect x="44.20" y="273.20" width="0.55" height="2" fill="#8a8a8a" opacity="0.75"/><rect x="15.60" y="280.50" width="0.55" height="2" fill="#8a8a8a" opacity="0.75"/><rect x="16.15" y="280.50" width="3.30" height="2" fill="#dcdcdc" opacity="0.75"/><rect x="20.00" y="280.50" width="6.05" height="2" fill="#79aedb" opacity="0.75"/><rect x="26.05" y="280.50" width="0.55" height="2" fill="#8a8a8a" opacity="0.75"/><rect x="26.60" y="280.50" width="0.55" height="2" fill="#79aedb" opacity="0.75"/><rect x="27.15" y="280.50" width="0.55" height="2" fill="#4f8fcf" opacity="0.75"/><rect x="27.70" y="280.50" width="0.55" height="2" fill="#79aedb" opacity="0.75"/><rect x="28.80" y="280.50" width="4.40" height="2" fill="#79aedb" opacity="0.75"/><rect x="33.20" y="280.50" width="0.55" height="2" fill="#8a8a8a" opacity="0.75"/><rect x="33.75" y="280.50" width="0.55" height="2" fill="#79aedb" opacity="0.75"/><rect x="34.30" y="280.50" width="0.55" height="2" fill="#4f8fcf" opacity="0.75"/><rect x="34.85" y="280.50" width="0.55" height="2" fill="#79aedb" opacity="0.75"/><rect x="35.95" y="280.50" width="0.55" height="2" fill="#8a8a8a" opacity="0.75"/><rect x="36.50" y="280.50" width="3.30" height="2" fill="#bdbdbd" opacity="0.75"/><rect x="39.80" y="280.50" width="1.10" height="2" fill="#8a8a8a" opacity="0.75"/><rect x="40.90" y="280.50" width="3.30" height="2" fill="#dcdcdc" opacity="0.75"/><rect x="44.20" y="280.50" width="0.55" height="2" fill="#8a8a8a" opacity="0.75"/><rect x="15.60" y="287.80" width="0.55" height="2" fill="#8a8a8a" opacity="0.75"/><rect x="16.15" y="287.80" width="3.30" height="2" fill="#dcdcdc" opacity="0.75"/><rect x="20.00" y="287.80" width="6.05" height="2" fill="#79aedb" opacity="0.75"/><rect x="26.05" y="287.80" width="0.55" height="2" fill="#8a8a8a" opacity="0.75"/><rect x="26.60" y="287.80" width="0.55" height="2" fill="#79aedb" opacity="0.75"/><rect x="27.15" y="287.80" width="0.55" height="2" fill="#4f8fcf" opacity="0.75"/><rect x="27.70" y="287.80" width="0.55" height="2" fill="#79aedb" opacity="0.75"/><rect x="28.80" y="287.80" width="4.40" height="2" fill="#79aedb" opacity="0.75"/><rect x="33.20" y="287.80" width="0.55" height="2" fill="#8a8a8a" opacity="0.75"/><rect x="33.75" y="287.80" width="0.55" height="2" fill="#79aedb" opacity="0.75"/><rect x="34.30" y="287.80" width="0.55" height="2" fill="#4f8fcf" opacity="0.75"/><rect x="34.85" y="287.80" width="0.55" height="2" fill="#79aedb" opacity="0.75"/><rect x="35.95" y="287.80" width="0.55" height="2" fill="#8a8a8a" opacity="0.75"/><rect x="36.50" y="287.80" width="3.30" height="2" fill="#bdbdbd" opacity="0.75"/><rect x="39.80" y="287.80" width="1.10" height="2" fill="#8a8a8a" opacity="0.75"/><rect x="40.90" y="287.80" width="3.30" height="2" fill="#dcdcdc" opacity="0.75"/><rect x="44.20" y="287.80" width="0.55" height="2" fill="#8a8a8a" opacity="0.75"/><rect x="15.60" y="295.10" width="0.55" height="2" fill="#8a8a8a" opacity="0.75"/><rect x="16.15" y="295.10" width="3.30" height="2" fill="#dcdcdc" opacity="0.75"/><rect x="20.00" y="295.10" width="6.05" height="2" fill="#79aedb" opacity="0.75"/><rect x="26.05" y="295.10" width="0.55" height="2" fill="#8a8a8a" opacity="0.75"/><rect x="26.60" y="295.10" width="0.55" height="2" fill="#79aedb" opacity="0.75"/><rect x="27.15" y="295.10" width="0.55" height="2" fill="#4f8fcf" opacity="0.75"/><rect x="27.70" y="295.10" width="0.55" height="2" fill="#79aedb" opacity="0.75"/><rect x="28.80" y="295.10" width="4.40" height="2" fill="#79aedb" opacity="0.75"/><rect x="33.20" y="295.10" width="0.55" height="2" fill="#8a8a8a" opacity="0.75"/><rect x="33.75" y="295.10" width="0.55" height="2" fill="#79aedb" opacity="0.75"/><rect x="34.30" y="295.10" width="0.55" height="2" fill="#4f8fcf" opacity="0.75"/><rect x="34.85" y="295.10" width="0.55" height="2" fill="#79aedb" opacity="0.75"/><rect x="35.95" y="295.10" width="0.55" height="2" fill="#8a8a8a" opacity="0.75"/><rect x="36.50" y="295.10" width="3.30" height="2" fill="#bdbdbd" opacity="0.75"/><rect x="39.80" y="295.10" width="1.10" height="2" fill="#8a8a8a" opacity="0.75"/><rect x="40.90" y="295.10" width="3.30" height="2" fill="#dcdcdc" opacity="0.75"/><rect x="44.20" y="295.10" width="0.55" height="2" fill="#8a8a8a" opacity="0.75"/><rect x="15.60" y="309.70" width="0.55" height="2" fill="#8a8a8a" opacity="0.75"/><rect x="16.15" y="309.70" width="3.30" height="2" fill="#dcdcdc" opacity="0.75"/><rect x="20.00" y="309.70" width="6.05" height="2" fill="#79aedb" opacity="0.75"/><rect x="26.05" y="309.70" width="0.55" height="2" fill="#8a8a8a" opacity="0.75"/><rect x="26.60" y="309.70" width="0.55" height="2" fill="#79aedb" opacity="0.75"/><rect x="27.15" y="309.70" width="0.55" height="2" fill="#4f8fcf" opacity="0.75"/><rect x="27.70" y="309.70" width="0.55" height="2" fill="#79aedb" opacity="0.75"/><rect x="28.80" y="309.70" width="4.40" height="2" fill="#79aedb" opacity="0.75"/><rect x="33.20" y="309.70" width="0.55" height="2" fill="#8a8a8a" opacity="0.75"/><rect x="33.75" y="309.70" width="0.55" height="2" fill="#79aedb" opacity="0.75"/><rect x="34.30" y="309.70" width="0.55" height="2" fill="#4f8fcf" opacity="0.75"/><rect x="34.85" y="309.70" width="0.55" height="2" fill="#79aedb" opacity="0.75"/><rect x="35.95" y="309.70" width="0.55" height="2" fill="#8a8a8a" opacity="0.75"/><rect x="36.50" y="309.70" width="3.30" height="2" fill="#bdbdbd" opacity="0.75"/><rect x="39.80" y="309.70" width="1.10" height="2" fill="#8a8a8a" opacity="0.75"/><rect x="40.90" y="309.70" width="3.30" height="2" fill="#dcdcdc" opacity="0.75"/><rect x="44.20" y="309.70" width="0.55" height="2" fill="#8a8a8a" opacity="0.75"/><rect x="15.60" y="317.00" width="0.55" height="2" fill="#8a8a8a" opacity="0.75"/><rect x="16.15" y="317.00" width="3.30" height="2" fill="#dcdcdc" opacity="0.75"/><rect x="20.00" y="317.00" width="6.05" height="2" fill="#79aedb" opacity="0.75"/><rect x="26.05" y="317.00" width="0.55" height="2" fill="#8a8a8a" opacity="0.75"/><rect x="26.60" y="317.00" width="0.55" height="2" fill="#79aedb" opacity="0.75"/><rect x="27.15" y="317.00" width="0.55" height="2" fill="#4f8fcf" opacity="0.75"/><rect x="27.70" y="317.00" width="0.55" height="2" fill="#79aedb" opacity="0.75"/><rect x="28.80" y="317.00" width="4.40" height="2" fill="#79aedb" opacity="0.75"/><rect x="33.20" y="317.00" width="0.55" height="2" fill="#8a8a8a" opacity="0.75"/><rect x="33.75" y="317.00" width="0.55" height="2" fill="#79aedb" opacity="0.75"/><rect x="34.30" y="317.00" width="0.55" height="2" fill="#4f8fcf" opacity="0.75"/><rect x="34.85" y="317.00" width="0.55" height="2" fill="#79aedb" opacity="0.75"/><rect x="35.95" y="317.00" width="0.55" height="2" fill="#8a8a8a" opacity="0.75"/><rect x="36.50" y="317.00" width="3.85" height="2" fill="#bdbdbd" opacity="0.75"/><rect x="40.35" y="317.00" width="1.10" height="2" fill="#8a8a8a" opacity="0.75"/><rect x="41.45" y="317.00" width="3.30" height="2" fill="#dcdcdc" opacity="0.75"/><rect x="44.75" y="317.00" width="0.55" height="2" fill="#8a8a8a" opacity="0.75"/><rect x="15.60" y="324.30" width="0.55" height="2" fill="#8a8a8a" opacity="0.75"/><rect x="16.15" y="324.30" width="3.30" height="2" fill="#dcdcdc" opacity="0.75"/><rect x="20.00" y="324.30" width="6.05" height="2" fill="#79aedb" opacity="0.75"/><rect x="26.05" y="324.30" width="0.55" height="2" fill="#8a8a8a" opacity="0.75"/><rect x="26.60" y="324.30" width="0.55" height="2" fill="#79aedb" opacity="0.75"/><rect x="27.15" y="324.30" width="0.55" height="2" fill="#4f8fcf" opacity="0.75"/><rect x="27.70" y="324.30" width="0.55" height="2" fill="#79aedb" opacity="0.75"/><rect x="28.80" y="324.30" width="4.40" height="2" fill="#79aedb" opacity="0.75"/><rect x="33.20" y="324.30" width="0.55" height="2" fill="#8a8a8a" opacity="0.75"/><rect x="33.75" y="324.30" width="0.55" height="2" fill="#79aedb" opacity="0.75"/><rect x="34.30" y="324.30" width="0.55" height="2" fill="#4f8fcf" opacity="0.75"/><rect x="34.85" y="324.30" width="0.55" height="2" fill="#79aedb" opacity="0.75"/><rect x="35.95" y="324.30" width="0.55" height="2" fill="#8a8a8a" opacity="0.75"/><rect x="36.50" y="324.30" width="3.85" height="2" fill="#bdbdbd" opacity="0.75"/><rect x="40.35" y="324.30" width="1.10" height="2" fill="#8a8a8a" opacity="0.75"/><rect x="41.45" y="324.30" width="3.30" height="2" fill="#dcdcdc" opacity="0.75"/><rect x="44.75" y="324.30" width="0.55" height="2" fill="#8a8a8a" opacity="0.75"/><rect x="15.60" y="331.60" width="0.55" height="2" fill="#8a8a8a" opacity="0.75"/><rect x="16.15" y="331.60" width="3.30" height="2" fill="#dcdcdc" opacity="0.75"/><rect x="20.00" y="331.60" width="6.05" height="2" fill="#79aedb" opacity="0.75"/><rect x="26.05" y="331.60" width="0.55" height="2" fill="#8a8a8a" opacity="0.75"/><rect x="26.60" y="331.60" width="0.55" height="2" fill="#79aedb" opacity="0.75"/><rect x="27.15" y="331.60" width="0.55" height="2" fill="#4f8fcf" opacity="0.75"/><rect x="27.70" y="331.60" width="0.55" height="2" fill="#79aedb" opacity="0.75"/><rect x="28.80" y="331.60" width="4.40" height="2" fill="#79aedb" opacity="0.75"/><rect x="33.20" y="331.60" width="0.55" height="2" fill="#8a8a8a" opacity="0.75"/><rect x="33.75" y="331.60" width="0.55" height="2" fill="#79aedb" opacity="0.75"/><rect x="34.30" y="331.60" width="0.55" height="2" fill="#4f8fcf" opacity="0.75"/><rect x="34.85" y="331.60" width="0.55" height="2" fill="#79aedb" opacity="0.75"/><rect x="35.95" y="331.60" width="0.55" height="2" fill="#8a8a8a" opacity="0.75"/><rect x="36.50" y="331.60" width="3.85" height="2" fill="#bdbdbd" opacity="0.75"/><rect x="40.35" y="331.60" width="1.10" height="2" fill="#8a8a8a" opacity="0.75"/><rect x="41.45" y="331.60" width="3.30" height="2" fill="#dcdcdc" opacity="0.75"/><rect x="44.75" y="331.60" width="0.55" height="2" fill="#8a8a8a" opacity="0.75"/><rect x="15.60" y="346.20" width="0.55" height="2" fill="#8a8a8a" opacity="0.75"/><rect x="16.15" y="346.20" width="3.30" height="2" fill="#dcdcdc" opacity="0.75"/><rect x="20.00" y="346.20" width="6.05" height="2" fill="#79aedb" opacity="0.75"/><rect x="26.05" y="346.20" width="0.55" height="2" fill="#8a8a8a" opacity="0.75"/><rect x="26.60" y="346.20" width="0.55" height="2" fill="#79aedb" opacity="0.75"/><rect x="27.15" y="346.20" width="0.55" height="2" fill="#4f8fcf" opacity="0.75"/><rect x="27.70" y="346.20" width="0.55" height="2" fill="#79aedb" opacity="0.75"/><rect x="28.80" y="346.20" width="4.40" height="2" fill="#79aedb" opacity="0.75"/><rect x="33.20" y="346.20" width="0.55" height="2" fill="#8a8a8a" opacity="0.75"/><rect x="33.75" y="346.20" width="0.55" height="2" fill="#79aedb" opacity="0.75"/><rect x="34.30" y="346.20" width="0.55" height="2" fill="#4f8fcf" opacity="0.75"/><rect x="34.85" y="346.20" width="0.55" height="2" fill="#79aedb" opacity="0.75"/><rect x="35.95" y="346.20" width="0.55" height="2" fill="#8a8a8a" opacity="0.75"/><rect x="36.50" y="346.20" width="3.85" height="2" fill="#bdbdbd" opacity="0.75"/><rect x="40.35" y="346.20" width="1.10" height="2" fill="#8a8a8a" opacity="0.75"/><rect x="41.45" y="346.20" width="3.30" height="2" fill="#dcdcdc" opacity="0.75"/><rect x="44.75" y="346.20" width="0.55" height="2" fill="#8a8a8a" opacity="0.75"/><rect x="15.60" y="353.50" width="0.55" height="2" fill="#8a8a8a" opacity="0.75"/><rect x="16.15" y="353.50" width="3.30" height="2" fill="#dcdcdc" opacity="0.75"/><rect x="20.00" y="353.50" width="6.05" height="2" fill="#79aedb" opacity="0.75"/><rect x="26.05" y="353.50" width="0.55" height="2" fill="#8a8a8a" opacity="0.75"/><rect x="26.60" y="353.50" width="0.55" height="2" fill="#79aedb" opacity="0.75"/><rect x="27.15" y="353.50" width="0.55" height="2" fill="#4f8fcf" opacity="0.75"/><rect x="27.70" y="353.50" width="0.55" height="2" fill="#79aedb" opacity="0.75"/><rect x="28.80" y="353.50" width="4.40" height="2" fill="#79aedb" opacity="0.75"/><rect x="33.20" y="353.50" width="0.55" height="2" fill="#8a8a8a" opacity="0.75"/><rect x="33.75" y="353.50" width="0.55" height="2" fill="#79aedb" opacity="0.75"/><rect x="34.30" y="353.50" width="0.55" height="2" fill="#4f8fcf" opacity="0.75"/><rect x="34.85" y="353.50" width="0.55" height="2" fill="#79aedb" opacity="0.75"/><rect x="35.95" y="353.50" width="0.55" height="2" fill="#8a8a8a" opacity="0.75"/><rect x="36.50" y="353.50" width="3.85" height="2" fill="#bdbdbd" opacity="0.75"/><rect x="40.35" y="353.50" width="1.10" height="2" fill="#8a8a8a" opacity="0.75"/><rect x="41.45" y="353.50" width="3.30" height="2" fill="#dcdcdc" opacity="0.75"/><rect x="44.75" y="353.50" width="0.55" height="2" fill="#8a8a8a" opacity="0.75"/><rect x="15.60" y="360.80" width="0.55" height="2" fill="#8a8a8a" opacity="0.75"/><rect x="16.15" y="360.80" width="3.30" height="2" fill="#dcdcdc" opacity="0.75"/><rect x="20.00" y="360.80" width="6.05" height="2" fill="#79aedb" opacity="0.75"/><rect x="26.05" y="360.80" width="0.55" height="2" fill="#8a8a8a" opacity="0.75"/><rect x="26.60" y="360.80" width="0.55" height="2" fill="#79aedb" opacity="0.75"/><rect x="27.15" y="360.80" width="0.55" height="2" fill="#4f8fcf" opacity="0.75"/><rect x="27.70" y="360.80" width="0.55" height="2" fill="#79aedb" opacity="0.75"/><rect x="28.80" y="360.80" width="4.40" height="2" fill="#79aedb" opacity="0.75"/><rect x="33.20" y="360.80" width="0.55" height="2" fill="#8a8a8a" opacity="0.75"/><rect x="33.75" y="360.80" width="0.55" height="2" fill="#79aedb" opacity="0.75"/><rect x="34.30" y="360.80" width="0.55" height="2" fill="#4f8fcf" opacity="0.75"/><rect x="34.85" y="360.80" width="0.55" height="2" fill="#79aedb" opacity="0.75"/><rect x="35.95" y="360.80" width="0.55" height="2" fill="#8a8a8a" opacity="0.75"/><rect x="36.50" y="360.80" width="3.85" height="2" fill="#bdbdbd" opacity="0.75"/><rect x="40.35" y="360.80" width="1.10" height="2" fill="#8a8a8a" opacity="0.75"/><rect x="41.45" y="360.80" width="3.30" height="2" fill="#dcdcdc" opacity="0.75"/><rect x="44.75" y="360.80" width="0.55" height="2" fill="#8a8a8a" opacity="0.75"/><rect x="15.60" y="368.10" width="0.55" height="2" fill="#8a8a8a" opacity="0.75"/><rect x="16.15" y="368.10" width="3.30" height="2" fill="#dcdcdc" opacity="0.75"/><rect x="20.00" y="368.10" width="6.05" height="2" fill="#79aedb" opacity="0.75"/><rect x="26.05" y="368.10" width="0.55" height="2" fill="#8a8a8a" opacity="0.75"/><rect x="26.60" y="368.10" width="0.55" height="2" fill="#79aedb" opacity="0.75"/><rect x="27.15" y="368.10" width="0.55" height="2" fill="#4f8fcf" opacity="0.75"/><rect x="27.70" y="368.10" width="0.55" height="2" fill="#79aedb" opacity="0.75"/><rect x="28.80" y="368.10" width="4.40" height="2" fill="#79aedb" opacity="0.75"/><rect x="33.20" y="368.10" width="0.55" height="2" fill="#8a8a8a" opacity="0.75"/><rect x="33.75" y="368.10" width="0.55" height="2" fill="#79aedb" opacity="0.75"/><rect x="34.30" y="368.10" width="0.55" height="2" fill="#4f8fcf" opacity="0.75"/><rect x="34.85" y="368.10" width="0.55" height="2" fill="#79aedb" opacity="0.75"/><rect x="35.95" y="368.10" width="0.55" height="2" fill="#8a8a8a" opacity="0.75"/><rect x="36.50" y="368.10" width="3.85" height="2" fill="#bdbdbd" opacity="0.75"/><rect x="40.35" y="368.10" width="1.10" height="2" fill="#8a8a8a" opacity="0.75"/><rect x="41.45" y="368.10" width="3.30" height="2" fill="#dcdcdc" opacity="0.75"/><rect x="44.75" y="368.10" width="0.55" height="2" fill="#8a8a8a" opacity="0.75"/><rect x="13.40" y="404.60" width="1.10" height="2" fill="#8a8a8a" opacity="0.55"/><rect x="14.50" y="404.60" width="2.20" height="2" fill="#dcdcdc" opacity="0.55"/><rect x="16.70" y="404.60" width="0.55" height="2" fill="#8a8a8a" opacity="0.55"/><rect x="11.20" y="419.20" width="1.10" height="2" fill="#8a8a8a" opacity="0.55"/><rect x="12.30" y="419.20" width="3.30" height="2" fill="#dcdcdc" opacity="0.55"/><rect x="15.60" y="419.20" width="0.55" height="2" fill="#8a8a8a" opacity="0.55"/><rect x="69" y="236.20" width="10" height="2" fill="#0f8c0f"/><rect x="69" y="243.50" width="10" height="2" fill="#0f8c0f"/><rect x="69" y="250.80" width="10" height="2" fill="#0f8c0f"/><rect x="69" y="258.10" width="10" height="2" fill="#0f8c0f"/><rect x="69" y="272.70" width="10" height="2" fill="#0f8c0f"/><rect x="69" y="280.00" width="10" height="2" fill="#0f8c0f"/><rect x="69" y="287.30" width="10" height="2" fill="#0f8c0f"/><rect x="69" y="294.60" width="10" height="2" fill="#0f8c0f"/><rect x="69" y="309.20" width="10" height="2" fill="#0f8c0f"/><rect x="69" y="316.50" width="10" height="2" fill="#0f8c0f"/><rect x="69" y="323.80" width="10" height="2" fill="#0f8c0f"/><rect x="69" y="331.10" width="10" height="2" fill="#0f8c0f"/><rect x="69" y="345.70" width="10" height="2" fill="#0f8c0f"/><rect x="69" y="353.00" width="10" height="2" fill="#0f8c0f"/><rect x="69" y="360.30" width="10" height="2" fill="#0f8c0f"/><rect x="69" y="367.60" width="10" height="2" fill="#0f8c0f"/></svg>
<div class="a" style="left:32px;top:797px;width:1464px;height:16px;background:#2e2e2e;"></div>
<div class="a" style="left:31px;top:812px;width:1545px;height:1px;background:#3a3a3a;"></div>
<div class="a" style="left:31px;top:119px;width:1px;height:694px;background:#3a3a3a;"></div>
<div class="a" style="left:1575px;top:119px;width:1px;height:694px;background:#3a3a3a;"></div>
<div class="a" style="left:32px;top:797px;width:60px;height:16px;background:#333333;border:1px solid #3d3d3d;"></div>
<span class="t" style="left:35.5px;top:797.32px;font-size:11.5px;color:#f1f1f1;letter-spacing:-0.921px;">146 %</span>
<svg style="left:82px;top:803px;" width="7" height="4" viewBox="0 0 7 4"><path d="M0 0H7 L3.5 4Z" fill="#d6d6d6"/></svg>
<svg style="left:97px;top:800px;" width="6" height="10" viewBox="0 0 6 10"><path d="M6 0 V10 L0.5 5 Z" fill="#9a9a9a"/></svg>
<svg style="left:1374px;top:800px;" width="6" height="10" viewBox="0 0 6 10"><path d="M0 0 V10 L5.5 5 Z" fill="#9a9a9a"/></svg>
<span class="t" style="left:1408px;top:797.32px;font-size:11.5px;color:#f1f1f1;letter-spacing:-0.328px;">Ln: 51</span>
<span class="t" style="left:1456px;top:797.32px;font-size:11.5px;color:#f1f1f1;letter-spacing:-0.497px;">Ch: 1</span>
<div class="a" style="left:1492px;top:798px;width:37px;height:15px;background:#333333;border:1px solid #3d3d3d;"></div>
<span class="t" style="left:1501px;top:797.32px;font-size:11.5px;color:#f1f1f1;letter-spacing:-1.549px;">SPC</span>
<div class="a" style="left:1531px;top:798px;width:44px;height:15px;background:#333333;border:1px solid #3d3d3d;"></div>
<span class="t" style="left:1540px;top:797.32px;font-size:11.5px;color:#f1f1f1;letter-spacing:-1.257px;">CRLF</span>
<div class="a" style="left:190px;top:183px;width:784px;height:441px;background:#ffffff;box-shadow:0 2px 10px rgba(0,0,0,0.55);"></div><svg style="left:198px;top:190px;" width="15" height="13" viewBox="0 0 15 13"><rect x="0.5" y="0.5" width="14" height="12" fill="#f4f4f4" stroke="#b8bcc4"/><rect x="1.5" y="2.5" width="6" height="9" fill="#3f8f74"/><rect x="1.5" y="2.5" width="6" height="4" fill="#4b86b8"/><rect x="8.5" y="2.5" width="3" height="9" fill="#d4d8de"/><rect x="12" y="2.5" width="2" height="4" fill="#4b86b8"/></svg><span class="t" style="left:219px;top:190.14px;color:#000;letter-spacing:0.381px;">MainWindow</span><div class="a" style="left:855px;top:197px;width:10px;height:1px;background:#000;"></div><div class="a" style="left:900px;top:192px;width:10px;height:10px;border:1px solid #000;"></div><svg style="left:945px;top:192px;" width="11" height="11" viewBox="0 0 11 11"><path d="M0.5 0.5 L10.5 10.5 M10.5 0.5 L0.5 10.5" stroke="#000" stroke-width="1.1"/></svg><div class="btn" style="left:190px;top:213px;width:196px;height:103px;">Butó 1</div><div class="btn" style="left:386px;top:213px;width:196px;height:103px;">Butó 2</div><div class="btn" style="left:582px;top:213px;width:196px;height:103px;">Butó 3</div><div class="btn" style="left:778px;top:213px;width:196px;height:103px;">Butó 4</div><div class="btn" style="left:190px;top:316px;width:196px;height:103px;">Butó 5</div><div class="btn" style="left:386px;top:316px;width:196px;height:103px;">Butó 6</div><div class="btn" style="left:582px;top:316px;width:196px;height:103px;">Butó 7</div><div class="btn" style="left:778px;top:316px;width:196px;height:103px;">Butó 8</div><div class="btn" style="left:190px;top:419px;width:196px;height:102px;">Butó 9</div><div class="btn" style="left:386px;top:419px;width:196px;height:102px;">Butó 10</div><div class="btn hot" style="left:582px;top:419px;width:196px;height:102px;">Butó 11</div><div class="btn" style="left:778px;top:419px;width:196px;height:102px;">Butó 12</div><div class="btn" style="left:190px;top:521px;width:196px;height:103px;">Butó 13</div><div class="btn" style="left:386px;top:521px;width:196px;height:103px;">Butó 14</div><div class="btn" style="left:582px;top:521px;width:196px;height:103px;">Butó 15</div><div class="btn" style="left:778px;top:521px;width:196px;height:103px;">Butó 16</div><div class="a" style="left:973px;top:214px;width:1px;height:410px;background:rgba(255,255,255,0.75);"></div><div class="a" style="left:190px;top:623px;width:784px;height:1px;background:rgba(255,255,255,0.75);"></div><div class="a" style="left:455px;top:183px;width:253px;height:21px;background:#1f1f1f;border:1px solid #3c3c3c;"></div><svg style="left:459px;top:186px;" width="5" height="15" viewBox="0 0 5 15"><rect x="0" y="0" width="1" height="1" fill="#5c5c5c"/><rect x="4" y="0" width="1" height="1" fill="#5c5c5c"/><rect x="2" y="2" width="1" height="1" fill="#5c5c5c"/><rect x="0" y="4" width="1" height="1" fill="#5c5c5c"/><rect x="4" y="4" width="1" height="1" fill="#5c5c5c"/><rect x="2" y="6" width="1" height="1" fill="#5c5c5c"/><rect x="0" y="8" width="1" height="1" fill="#5c5c5c"/><rect x="4" y="8" width="1" height="1" fill="#5c5c5c"/><rect x="2" y="10" width="1" height="1" fill="#5c5c5c"/><rect x="0" y="12" width="1" height="1" fill="#5c5c5c"/><rect x="4" y="12" width="1" height="1" fill="#5c5c5c"/><rect x="2" y="14" width="1" height="1" fill="#5c5c5c"/></svg><svg style="left:471px;top:185px;" width="16" height="16" viewBox="0 0 16 16"><path d="M0.6 15 V1 H8.5 V4" fill="none" stroke="#e8e8e8" stroke-width="1.2"/><rect x="0.6" y="0.6" width="8" height="2" fill="#e8e8e8"/><path d="M2.5 6.5 H5 M2.5 9.5 H4.5 M2.5 12.5 H5 M0.6 15 H6" stroke="#e8e8e8" stroke-width="1.1"/><circle cx="10.5" cy="10.5" r="3.2" fill="none" stroke="#e8e8e8" stroke-width="1.2"/><path d="M10.5 5.5 V8 M10.5 13 V15.5 M5.5 10.5 H8 M13 10.5 H15.5" stroke="#e8e8e8" stroke-width="1.2"/></svg><svg style="left:497px;top:185px;" width="16" height="16" viewBox="0 0 16 16"><rect x="0.6" y="3.6" width="10.5" height="8.5" fill="none" stroke="#e8e8e8" stroke-width="1.2"/><path d="M11.2 7.4 L15.2 4.8 V11 L11.2 8.6" fill="none" stroke="#e8e8e8" stroke-width="1.2"/></svg><div class="sep" style="left:521px;top:187px;height:13px;background:#444"></div><svg style="left:528px;top:185px;" width="16" height="16" viewBox="0 0 16 16"><path d="M3 7.5 H0.6 V0.6 H15.4 V7.5 H11" fill="none" stroke="#e8e8e8" stroke-width="1.2"/><path d="M4.2 4 V14.6 L7 12 L9.4 15.6 L10.6 14.8 L8.4 11.4 H11.8 Z" fill="#d8d8d8"/></svg><svg style="left:554px;top:185px;" width="16" height="16" viewBox="0 0 16 16"><rect x="0.6" y="0.6" width="14.8" height="14.8" fill="none" stroke="#e8e8e8" stroke-width="1.2"/><rect x="4.6" y="4.6" width="6.8" height="6.8" fill="none" stroke="#e8e8e8" stroke-width="1.2"/></svg><svg style="left:580px;top:185px;" width="16" height="16" viewBox="0 0 16 16"><path d="M0.6 3 V0.6 H3 M5.5 0.6 H10 M12.5 0.6 H15.4 V3 M15.4 5 V7.5 H13 M0.6 5 V7.5 H3" fill="none" stroke="#e8e8e8" stroke-width="1.2"/><path d="M5.2 4 V14.6 L8 12 L10.4 15.6 L11.6 14.8 L9.4 11.4 H12.8 Z" fill="#d8d8d8"/></svg><div class="sep" style="left:604px;top:187px;height:13px;background:#444"></div><svg style="left:611px;top:185px;" width="16" height="16" viewBox="0 0 16 16"><path d="M4 1 C2 1 2.4 3 2.4 5 C2.4 7 1.8 7.6 0.6 8 C1.8 8.4 2.4 9 2.4 11 C2.4 13 2 15 4 15 M12 1 C14 1 13.6 3 13.6 5 C13.6 7 14.2 7.6 15.4 8 C14.2 8.4 13.6 9 13.6 11 C13.6 13 14 15 12 15" fill="none" stroke="#e8e8e8" stroke-width="1.3"/><circle cx="8" cy="8" r="3.6" fill="none" stroke="#e8e8e8" stroke-width="1.1"/><path d="M6 8 L7.5 9.6 L10.2 6.4" fill="none" stroke="#e8e8e8" stroke-width="1.1"/></svg><svg style="left:637px;top:185px;" width="16" height="16" viewBox="0 0 16 16"><circle cx="8" cy="8" r="7.2" fill="none" stroke="#e8e8e8" stroke-width="1.1"/><circle cx="8" cy="4.2" r="1.2" fill="#e8e8e8"/><path d="M4.2 6.4 H11.8 M8 6.4 V9.6 M8 9.6 L5.8 13.2 M8 9.6 L10.2 13.2" fill="none" stroke="#e8e8e8" stroke-width="1.1"/></svg><div class="sep" style="left:659px;top:187px;height:13px;background:#444"></div><svg style="left:666px;top:185px;" width="16" height="16" viewBox="0 0 16 16"><circle cx="8" cy="8" r="7.6" fill="#f4f4f4"/><circle cx="8" cy="8" r="6.3" fill="none" stroke="#2ea12e" stroke-width="1"/><path d="M4.4 8.2 L7 11.2 L11.6 4.8" fill="none" stroke="#2ea12e" stroke-width="1.8"/></svg><svg style="left:696px;top:188px;" width="6" height="10" viewBox="0 0 6 10"><path d="M5.5 0.5 L0.8 5 L5.5 9.5" fill="none" stroke="#5a5a5a" stroke-width="1.1"/></svg>
<!-- g_diag -->
<div class="a" style="left:1582px;top:97px;width:307px;height:716px;background:#1f1f1f;border:1px solid #3d3d3d;"></div>
<span class="t" style="left:1587.5px;top:100.84px;color:#d0d0d0;letter-spacing:-0.103px;">Diagnostic Tools</span>
<svg style="left:1840px;top:105px;" width="8" height="4.5" viewBox="0 0 8 4.5"><path d="M0 0H8 L4 4.5Z" fill="#d6d6d6"/></svg>
<svg style="left:1856px;top:102px;" width="9" height="11" viewBox="0 0 9 11"><path d="M2.5 0.5 H6.5 V6 M2.5 0.5 V6 M0.5 6.5 H8.5 M4.5 6.5 V10.5 M5.5 0.5 V6" fill="none" stroke="#e0e0e0" stroke-width="1"/></svg>
<svg style="left:1872px;top:103px;" width="10" height="10" viewBox="0 0 10 10"><path d="M0.8 0.8 L9.2 9.2 M9.2 0.8 L0.8 9.2" stroke="#e0e0e0" stroke-width="1.5"/></svg>
<svg style="left:1594px;top:126px;" width="14" height="14" viewBox="0 0 12 12"><path d="M9.60 6.00 L11.60 6.00 M8.55 8.55 L9.96 9.96 M6.00 9.60 L6.00 11.60 M3.45 8.55 L2.04 9.96 M2.40 6.00 L0.40 6.00 M3.45 3.45 L2.04 2.04 M6.00 2.40 L6.00 0.40 M8.55 3.45 L9.96 2.04 " stroke="#d6d6d6" stroke-width="2"/><circle cx="6" cy="6" r="3" fill="none" stroke="#d6d6d6" stroke-width="2"/></svg>
<div class="sep" style="left:1621px;top:125px;height:16px;background:#444"></div>
<svg style="left:1630px;top:126px;" width="15" height="14" viewBox="0 0 15 14"><path d="M7 0.6 H0.6 V12.4 H7" fill="none" stroke="#e8e8e8" stroke-width="1.2"/><path d="M4 6.5 H13.5 M10 2.8 L13.8 6.5 L10 10.2" fill="none" stroke="#55aaff" stroke-width="1.6"/></svg>
<div class="sep" style="left:1657px;top:125px;height:16px;background:#444"></div>
<svg style="left:1665px;top:126px;" width="14" height="14" viewBox="0 0 14 14"><circle cx="5" cy="5" r="4.2" fill="none" stroke="#e0e0e0" stroke-width="1.1"/><path d="M8.2 8.2 L12.5 12.5" stroke="#e0e0e0" stroke-width="1.6"/><path d="M2.6 5 H7.4 M5 2.6 V7.4" stroke="#55aaff" stroke-width="1.2"/></svg>
<svg style="left:1693px;top:128px;" width="14" height="14" viewBox="0 0 14 14"><circle cx="5" cy="5" r="4.2" fill="none" stroke="#e0e0e0" stroke-width="1.1"/><path d="M8.2 8.2 L12.5 12.5" stroke="#e0e0e0" stroke-width="1.6"/><path d="M2.6 5 H7.4" stroke="#55aaff" stroke-width="1.2"/></svg>
<svg style="left:1720px;top:126px;" width="14" height="15" viewBox="0 0 14 15"><path d="M2 8 V14 M5.5 10 V14 M9 5 V14 M12.5 8 V14" stroke="#6a6a6a" stroke-width="1.6"/><path d="M1 2.6 C1.4 0.4 4.6 0.4 4.4 2.4 C4.3 3.6 3 3.6 3 5" fill="none" stroke="#6a6a6a" stroke-width="0.9"/></svg>
<span class="t" style="left:1593.5px;top:149.84px;color:#ffffff;font-weight:bold;letter-spacing:-0.585px;">Diagnostics session: 5 seconds</span>
<div class="a" style="left:1583px;top:168px;width:305px;height:1px;background:#3d3d3d;"></div>
<div class="a" style="left:1583px;top:191px;width:305px;height:1px;background:#3d3d3d;"></div>
<div class="a" style="left:1615px;top:169px;width:5px;height:22px;background:#f4f4f4;"></div>
<div class="a" style="left:1851px;top:169px;width:5px;height:22px;background:#f4f4f4;"></div>
<div class="a" style="left:1746px;top:169px;width:1px;height:22px;background:#555;"></div>
<div class="a" style="left:1646px;top:186px;width:1px;height:5px;background:#555;"></div>
<div class="a" style="left:1671px;top:186px;width:1px;height:5px;background:#555;"></div>
<div class="a" style="left:1696px;top:186px;width:1px;height:5px;background:#555;"></div>
<div class="a" style="left:1721px;top:186px;width:1px;height:5px;background:#555;"></div>
<div class="a" style="left:1772px;top:186px;width:1px;height:5px;background:#555;"></div>
<div class="a" style="left:1797px;top:186px;width:1px;height:5px;background:#555;"></div>
<div class="a" style="left:1823px;top:186px;width:1px;height:5px;background:#555;"></div>
<div class="a" style="left:1847px;top:186px;width:1px;height:5px;background:#555;"></div>
<span class="t" style="left:1749.5px;top:167.02px;font-size:11.5px;color:#f1f1f1;letter-spacing:-0.513px;">10s</span>
<svg style="left:1589px;top:198px;" width="7" height="7" viewBox="0 0 7 7"><path d="M6.5 0.5 V6.5 H0.5 Z" fill="#8a8a8a" stroke="#8a8a8a" stroke-width="0.6"/></svg>
<span class="t" style="left:1600.5px;top:194.84px;color:#ffffff;font-weight:bold;letter-spacing:-0.808px;">Events</span>
<div class="a" style="left:1619px;top:212px;width:233px;height:23px;border:1px solid #454545;"></div>
<div class="a" style="left:1746px;top:213px;width:1px;height:21px;background:#454545;"></div>
<div class="a" style="left:1602px;top:221px;width:3px;height:9px;background:#e8e8e8;"></div>
<div class="a" style="left:1607px;top:221px;width:3px;height:9px;background:#e8e8e8;"></div>
<svg style="left:1589px;top:243px;" width="7" height="7" viewBox="0 0 7 7"><path d="M6.5 0.5 V6.5 H0.5 Z" fill="#8a8a8a" stroke="#8a8a8a" stroke-width="0.6"/></svg>
<span class="t" style="left:1600.5px;top:239.84px;color:#ffffff;font-weight:bold;letter-spacing:-0.370px;">Process Memory (MB)</span>
<svg style="left:1743px;top:241px;" width="7" height="12" viewBox="0 0 7 12"><path d="M0.3 0.3 H6.7 V3 L4.6 11.5 H2.4 L0.3 3 Z" fill="#f2c14e"/></svg>
<svg style="left:1760px;top:241px;" width="11" height="10" viewBox="0 0 11 10"><path d="M0 0 H11 L5.5 9.5 Z" fill="#3f9bf2"/></svg>
<span class="t" style="left:1773.5px;top:239.84px;color:#f1f1f1;letter-spacing:-1.504px;">S</span>
<svg style="left:1790px;top:241px;" width="12" height="12" viewBox="0 0 12 12"><circle cx="6" cy="6" r="6" fill="#6fa6c4"/></svg>
<span class="t" style="left:1804px;top:239.84px;color:#f1f1f1;letter-spacing:-0.375px;">P..</span>
<div class="a" style="left:1619px;top:259px;width:233px;height:70px;border:1px solid #454545;"></div>
<div class="a" style="left:1746px;top:260px;width:1px;height:68px;background:#454545;"></div>
<svg style="left:1620px;top:261px;" width="232" height="67" viewBox="0 0 232 67"><path d="M1.2 67 L1.6 60 L8 45 L13.5 17 L19.7 6.2 H71.8 V67 Z" fill="#577e95"/><path d="M1.6 60 L8 45 L13.5 17 L19.7 6.2 H71.8" fill="none" stroke="#7fb2cc" stroke-width="0.8"/></svg>
<span class="t" style="left:1601px;top:259.84px;color:#f1f1f1;letter-spacing:-0.173px;">74</span>
<span class="t" style="left:1607.5px;top:313.84px;color:#f1f1f1;letter-spacing:-0.173px;">0</span>
<span class="t" style="left:1857px;top:259.84px;color:#f1f1f1;letter-spacing:-0.173px;">74</span>
<span class="t" style="left:1857px;top:313.84px;color:#f1f1f1;letter-spacing:-0.173px;">0</span>
<svg style="left:1589px;top:335px;" width="7" height="7" viewBox="0 0 7 7"><path d="M6.5 0.5 V6.5 H0.5 Z" fill="#8a8a8a" stroke="#8a8a8a" stroke-width="0.6"/></svg>
<span class="t" style="left:1600.5px;top:331.84px;color:#ffffff;font-weight:bold;letter-spacing:-0.468px;">CPU (% of all processors)</span>
<div class="a" style="left:1619px;top:349px;width:233px;height:70px;border:1px solid #454545;"></div>
<div class="a" style="left:1746px;top:350px;width:1px;height:68px;background:#454545;"></div>
<svg style="left:1620px;top:350px;" width="232" height="68" viewBox="0 0 232 68"><path d="M0.8 68 V60.5 L4.4 62 L10 58.3 H17 L21 64.7 L25.3 65.3 L29.4 67 H72.5 V68 Z" fill="#577e95"/><path d="M0.8 60.5 L4.4 62 L10 58.3 H17 L21 64.7 L25.3 65.3 L29.4 67 H72.5" fill="none" stroke="#7fb2cc" stroke-width="0.7"/></svg>
<span class="t" style="left:1595px;top:350.34px;color:#f1f1f1;letter-spacing:-0.340px;">100</span>
<span class="t" style="left:1607.5px;top:403.84px;color:#f1f1f1;letter-spacing:-0.173px;">0</span>
<span class="t" style="left:1857px;top:350.34px;color:#f1f1f1;letter-spacing:-0.340px;">100</span>
<span class="t" style="left:1857px;top:403.84px;color:#f1f1f1;letter-spacing:-0.173px;">0</span>
<div class="a" style="left:1583px;top:440px;width:305px;height:3px;background:#333333;"></div>
<div class="a" style="left:1587px;top:447px;width:63px;height:19px;border:1px solid #9a9a9a;"></div>
<span class="t" style="left:1593.5px;top:448.84px;color:#ffffff;letter-spacing:-0.120px;">Summary</span>
<div class="a" style="left:1650px;top:447px;width:46px;height:19px;border:1px solid #3d3d3d;"></div>
<span class="t" style="left:1656.5px;top:448.84px;color:#b4b4b4;letter-spacing:-0.531px;">Events</span>
<div class="a" style="left:1696px;top:447px;width:92px;height:19px;border:1px solid #3d3d3d;"></div>
<span class="t" style="left:1702.5px;top:448.84px;color:#b4b4b4;letter-spacing:-0.154px;">Memory Usage</span>
<div class="a" style="left:1788px;top:447px;width:70px;height:19px;border:1px solid #3d3d3d;"></div>
<span class="t" style="left:1794.5px;top:448.84px;color:#b4b4b4;letter-spacing:-0.651px;">CPU Usage</span>
<div class="a" style="left:1583px;top:465px;width:305px;height:2px;background:#a0a0a0;"></div>
<span class="t" style="left:1592px;top:471.84px;color:#ffffff;font-weight:bold;letter-spacing:-0.725px;">Events</span>
<div class="a" style="left:1583px;top:490px;width:305px;height:1px;background:#333;"></div>
<svg style="left:1599px;top:502px;" width="12" height="6" viewBox="0 0 12 6"><path d="M2.5 0.5 L0.5 3 L2.5 5.5 L4.5 3 Z" fill="none" stroke="#b0b0b0" stroke-width="0.8"/><path d="M5.5 0.5 L7.5 3 L5.5 5.5 M8.5 0.5 L10.5 3 L8.5 5.5" fill="none" stroke="#b0b0b0" stroke-width="0.9"/></svg>
<span class="t" style="left:1619.5px;top:497.84px;color:#ffffff;letter-spacing:-0.244px;">Show Events (0 of 0)</span>
<div class="a" style="left:1583px;top:519px;width:305px;height:1px;background:#333;"></div>
<span class="t" style="left:1592px;top:523.84px;color:#ffffff;font-weight:bold;letter-spacing:-0.197px;">Memory Usage</span>
<div class="a" style="left:1583px;top:542px;width:305px;height:1px;background:#333;"></div>
<svg style="left:1599px;top:552px;" width="12" height="10" viewBox="0 0 12 10"><path d="M0 1.5 H3 L4 0 H8 L9 1.5 H12 V10 H0 Z" fill="#c8c8c8"/><circle cx="6.4" cy="5.6" r="2.3" fill="#1f1f1f"/><circle cx="6.4" cy="5.6" r="1.2" fill="#c8c8c8"/></svg>
<span class="t" style="left:1619.5px;top:549.84px;color:#ffffff;letter-spacing:-0.260px;">Take Snapshot</span>
<div class="a" style="left:1583px;top:571px;width:305px;height:1px;background:#333;"></div>
<span class="t" style="left:1592px;top:575.84px;color:#ffffff;font-weight:bold;letter-spacing:-0.521px;">CPU Usage</span>
<div class="a" style="left:1583px;top:594px;width:305px;height:1px;background:#333;"></div>
<svg style="left:1600px;top:604px;" width="9" height="9" viewBox="0 0 9 9"><circle cx="4.5" cy="4.5" r="4.3" fill="#c8c8c8"/></svg>
<span class="t" style="left:1619.5px;top:601.84px;color:#ffffff;letter-spacing:-0.317px;">Record CPU Profile</span>
<div class="t" style="left:1911px;top:97px;transform-origin:0 0;transform:rotate(90deg);color:#c8c8c8;letter-spacing:-0.081px">Solution Explorer</div>
<div class="a" style="left:1914px;top:97px;width:6px;height:90px;background:#333333;"></div>
<div class="t" style="left:1911px;top:200px;transform-origin:0 0;transform:rotate(90deg);color:#c8c8c8;letter-spacing:-0.382px">Git Changes</div>
<div class="a" style="left:1914px;top:200px;width:6px;height:63px;background:#333333;"></div>
<div class="t" style="left:1911px;top:275px;transform-origin:0 0;transform:rotate(90deg);color:#c8c8c8;letter-spacing:-0.169px">Live Property Explorer</div>
<div class="a" style="left:1914px;top:275px;width:6px;height:115px;background:#333333;"></div>
<div class="a" style="left:1895px;top:276px;width:0;height:114px;border-left:1px dashed #7a2626"></div>
<div class="t" style="left:1911px;top:402px;transform-origin:0 0;transform:rotate(90deg);color:#c8c8c8;letter-spacing:-0.211px">XAML Live Preview</div>
<div class="a" style="left:1914px;top:402px;width:6px;height:100px;background:#333333;"></div>
<!-- g_bottom -->
<div class="a" style="left:31px;top:819px;width:923px;height:172px;border:1px solid #3d3d3d;"></div>
<span class="t" style="left:36px;top:822.84px;color:#d0d0d0;letter-spacing:0.063px;">Autos</span>
<svg style="left:905px;top:827px;" width="8" height="4.5" viewBox="0 0 8 4.5"><path d="M0 0H8 L4 4.5Z" fill="#d6d6d6"/></svg>
<svg style="left:921px;top:824px;" width="9" height="11" viewBox="0 0 9 11"><path d="M2.5 0.5 H6.5 V6 M2.5 0.5 V6 M0.5 6.5 H8.5 M4.5 6.5 V10.5 M5.5 0.5 V6" fill="none" stroke="#e0e0e0" stroke-width="1"/></svg>
<svg style="left:937px;top:825px;" width="10" height="10" viewBox="0 0 10 10"><path d="M0.8 0.8 L9.2 9.2 M9.2 0.8 L0.8 9.2" stroke="#e0e0e0" stroke-width="1.5"/></svg>
<div class="a" style="left:33px;top:843px;width:224px;height:21px;background:#383838;"></div>
<span class="t" style="left:37px;top:846.34px;color:#f1f1f1;letter-spacing:-0.503px;">Search</span>
<svg style="left:229px;top:847px;" width="13" height="13" viewBox="0 0 13 13"><circle cx="8.2" cy="4.8" r="3.4" fill="none" stroke="#e0e0e0" stroke-width="1.7"/><path d="M5.8 7.2 L1.2 11.8" stroke="#e0e0e0" stroke-width="2" stroke-linecap="round"/></svg>
<svg style="left:247px;top:852px;" width="6" height="3.5" viewBox="0 0 6 3.5"><path d="M0 0H6 L3 3.5Z" fill="#d6d6d6"/></svg>
<svg style="left:265px;top:848px;" width="14" height="11" viewBox="0 0 14 11"><path d="M13.5 5.5 H1 M5.5 1 L1 5.5 L5.5 10" fill="none" stroke="#4d4d4d" stroke-width="1.1"/></svg>
<svg style="left:287px;top:848px;" width="14" height="11" viewBox="0 0 14 11"><path d="M0.5 5.5 H13 M8.5 1 L13 5.5 L8.5 10" fill="none" stroke="#4d4d4d" stroke-width="1.1"/></svg>
<span class="t" style="left:308px;top:846.84px;color:#5f5f5f;letter-spacing:-0.285px;">Search Depth:</span>
<div class="a" style="left:387px;top:844px;width:40px;height:20px;background:#313131;border:1px solid #3f3f3f;"></div>
<svg style="left:417px;top:852px;" width="6" height="3.5" viewBox="0 0 6 3.5"><path d="M0 0H6 L3 3.5Z" fill="#5c5c5c"/></svg>
<span class="t" style="left:46px;top:868.84px;color:#8c8c8c;letter-spacing:-0.002px;">Name</span>
<span class="t" style="left:344px;top:868.84px;color:#8c8c8c;letter-spacing:-0.160px;">Value</span>
<span class="t" style="left:792px;top:868.84px;color:#8c8c8c;letter-spacing:-0.253px;">Type</span>
<div class="a" style="left:40px;top:868px;width:1px;height:18px;background:#2c2c2c;"></div>
<div class="a" style="left:338px;top:868px;width:1px;height:18px;background:#2c2c2c;"></div>
<div class="a" style="left:786px;top:868px;width:1px;height:18px;background:#2c2c2c;"></div>
<div class="a" style="left:33px;top:886px;width:903px;height:1px;background:#333;"></div>
<div class="a" style="left:936px;top:867px;width:17px;height:123px;background:#2e2e2e;"></div><div class="a" style="left:940px;top:884px;width:9px;height:89px;background:#3e3e3e;"></div><svg style="left:940px;top:873px;" width="9" height="5" viewBox="0 0 9 5"><path d="M0 5 H9 L4.5 0.2 Z" fill="#8c8c8c"/></svg><svg style="left:940px;top:979px;" width="9" height="5" viewBox="0 0 9 5"><path d="M0 0 H9 L4.5 4.8 Z" fill="#8c8c8c"/></svg>
<div class="a" style="left:31px;top:990px;width:43px;height:21px;background:#1f1f1f;border:1px solid #3d3d3d;border-top:none;"></div>
<span class="t" style="left:37px;top:991.84px;color:#ffffff;letter-spacing:0.063px;">Autos</span>
<span class="t" style="left:80px;top:991.84px;color:#c0c0c0;letter-spacing:-0.281px;">Locals</span>
<span class="t" style="left:125px;top:991.84px;color:#c0c0c0;letter-spacing:-0.224px;">Watch 1</span>
<div class="a" style="left:960px;top:819px;width:929px;height:172px;border:1px solid #3d3d3d;"></div>
<span class="t" style="left:965px;top:822.84px;color:#d0d0d0;letter-spacing:-0.302px;">Call Stack</span>
<svg style="left:1840px;top:827px;" width="8" height="4.5" viewBox="0 0 8 4.5"><path d="M0 0H8 L4 4.5Z" fill="#d6d6d6"/></svg>
<svg style="left:1856px;top:824px;" width="9" height="11" viewBox="0 0 9 11"><path d="M2.5 0.5 H6.5 V6 M2.5 0.5 V6 M0.5 6.5 H8.5 M4.5 6.5 V10.5 M5.5 0.5 V6" fill="none" stroke="#e0e0e0" stroke-width="1"/></svg>
<svg style="left:1872px;top:825px;" width="10" height="10" viewBox="0 0 10 10"><path d="M0.8 0.8 L9.2 9.2 M9.2 0.8 L0.8 9.2" stroke="#e0e0e0" stroke-width="1.5"/></svg>
<div class="a" style="left:961px;top:843px;width:225px;height:21px;background:#383838;"></div>
<span class="t" style="left:966px;top:846.34px;color:#f1f1f1;letter-spacing:-0.503px;">Search</span>
<svg style="left:1158px;top:847px;" width="13" height="13" viewBox="0 0 13 13"><circle cx="8.2" cy="4.8" r="3.4" fill="none" stroke="#e0e0e0" stroke-width="1.7"/><path d="M5.8 7.2 L1.2 11.8" stroke="#e0e0e0" stroke-width="2" stroke-linecap="round"/></svg>
<svg style="left:1176px;top:852px;" width="6" height="3.5" viewBox="0 0 6 3.5"><path d="M0 0H6 L3 3.5Z" fill="#d6d6d6"/></svg>
<svg style="left:1194px;top:848px;" width="14" height="11" viewBox="0 0 14 11"><path d="M13.5 5.5 H1 M5.5 1 L1 5.5 L5.5 10" fill="none" stroke="#4d4d4d" stroke-width="1.1"/></svg>
<svg style="left:1217px;top:848px;" width="14" height="11" viewBox="0 0 14 11"><path d="M0.5 5.5 H13 M8.5 1 L13 5.5 L8.5 10" fill="none" stroke="#4d4d4d" stroke-width="1.1"/></svg>
<div class="sep" style="left:1237px;top:845px;height:18px;background:#444"></div>
<svg style="left:1245px;top:847px;" width="14" height="13" viewBox="0 0 14 13"><path d="M0.5 1.5 H5 M0.5 1.5 V11.5 H4 M0.5 6.5 H4" fill="none" stroke="#4d4d4d"/><rect x="6.5" y="0.5" width="7" height="3" fill="none" stroke="#4d4d4d"/><rect x="5.5" y="5" width="3.5" height="3" fill="none" stroke="#4d4d4d"/><rect x="10" y="5" width="3.5" height="3" fill="none" stroke="#4d4d4d"/><rect x="5.5" y="9.5" width="3.5" height="3" fill="none" stroke="#4d4d4d"/><rect x="10" y="9.5" width="3.5" height="3" fill="none" stroke="#4d4d4d"/></svg>
<span class="t" style="left:1265px;top:846.34px;color:#5f5f5f;letter-spacing:-0.267px;">View all Threads</span>
<div class="sep" style="left:1360px;top:845px;height:18px;background:#444"></div>
<svg style="left:1369px;top:847px;" width="14" height="14" viewBox="0 0 14 14"><rect x="0.6" y="3.6" width="9" height="9.6" fill="none" stroke="#e8e8e8" stroke-width="1.1"/><path d="M3.6 3.6 V0.6 H12.6 V10.6 H9.6 M2.8 7 H7.4 M2.8 9.6 H7.4" fill="none" stroke="#e8e8e8" stroke-width="1.1"/></svg>
<span class="t" style="left:1388px;top:846.34px;color:#f1f1f1;letter-spacing:-0.244px;">Show External Code</span>
<span class="t" style="left:983px;top:868.84px;color:#8c8c8c;letter-spacing:-0.002px;">Name</span>
<div class="a" style="left:1847px;top:868px;width:25px;height:18px;overflow:hidden"><span class="t" style="left:0px;top:0.84px;color:#8c8c8c;letter-spacing:-0.673px;">Lang</span></div>
<div class="a" style="left:977px;top:868px;width:1px;height:18px;background:#2c2c2c;"></div>
<div class="a" style="left:1841px;top:868px;width:1px;height:18px;background:#2c2c2c;"></div>
<div class="a" style="left:961px;top:886px;width:911px;height:1px;background:#333;"></div>
<div class="a" style="left:1871px;top:867px;width:17px;height:123px;background:#2e2e2e;"></div><div class="a" style="left:1875px;top:884px;width:9px;height:89px;background:#3e3e3e;"></div><svg style="left:1875px;top:873px;" width="9" height="5" viewBox="0 0 9 5"><path d="M0 5 H9 L4.5 0.2 Z" fill="#8c8c8c"/></svg><svg style="left:1875px;top:979px;" width="9" height="5" viewBox="0 0 9 5"><path d="M0 0 H9 L4.5 4.8 Z" fill="#8c8c8c"/></svg>
<div class="a" style="left:1214px;top:990px;width:63px;height:21px;background:#1f1f1f;border:1px solid #3d3d3d;border-top:none;"></div>
<span class="t" style="left:966px;top:991.84px;color:#c0c0c0;letter-spacing:-0.113px;">Accessibility Checker</span>
<span class="t" style="left:1089px;top:991.84px;color:#c0c0c0;letter-spacing:-0.124px;">XAML Binding Failures</span>
<span class="t" style="left:1220px;top:991.84px;color:#ffffff;letter-spacing:-0.302px;">Call Stack</span>
<span class="t" style="left:1283px;top:991.84px;color:#c0c0c0;letter-spacing:-0.124px;">Breakpoints</span>
<span class="t" style="left:1357px;top:991.84px;color:#c0c0c0;letter-spacing:-0.133px;">Exception Settings</span>
<span class="t" style="left:1466px;top:991.84px;color:#c0c0c0;letter-spacing:0.188px;">Command Window</span>
<span class="t" style="left:1582px;top:991.84px;color:#c0c0c0;letter-spacing:0.123px;">Immediate Window</span>
<span class="t" style="left:1698px;top:991.84px;color:#c0c0c0;letter-spacing:0.330px;">Output</span>
<div class="a" style="left:0px;top:1017px;width:1920px;height:23px;background:#8a1c30;"></div>
<svg style="left:4px;top:1021px;" width="17" height="17" viewBox="0 0 17 17"><path d="M0.6 0.6 H16 V12 H10 L8.3 14.6 L6.6 12 H0.6 Z" fill="#9a384b" stroke="#f4e6e8" stroke-width="1.1"/></svg>
<span class="t" style="left:28px;top:1021.34px;color:#ffffff;letter-spacing:-0.537px;">Ready</span>
<svg style="left:1492px;top:1022px;" width="11" height="13" viewBox="0 0 11 13"><path d="M5.5 13 V1 M1 5.5 L5.5 1 L10 5.5" fill="none" stroke="#fff" stroke-width="1.1"/></svg>
<span class="t" style="left:1512px;top:1021.34px;color:#ffffff;letter-spacing:-0.003px;">Add to Source Control</span>
<svg style="left:1636px;top:1027px;" width="8" height="4" viewBox="0 0 8 4"><path d="M0 4 H8 L4 0 Z" fill="#fff"/></svg>
<svg style="left:1667px;top:1023px;" width="14" height="12" viewBox="0 0 14 12"><path d="M0.5 0.5 H13.5 V3.5 H0.5 Z M1.5 3.5 V11.5 H12.5 V3.5 M4.5 5.5 V8.5 H9.5 V5.5 M7 5.5 V8.5" fill="none" stroke="#fff" stroke-width="1"/></svg>
<span class="t" style="left:1688px;top:1021.34px;color:#ffffff;letter-spacing:-0.238px;">Select Repository</span>
<svg style="left:1784px;top:1027px;" width="8" height="4" viewBox="0 0 8 4"><path d="M0 4 H8 L4 0 Z" fill="#fff"/></svg>
<svg style="left:1813px;top:1021px;" width="20" height="18" viewBox="0 0 20 18"><path d="M2 10.6 C3.2 9.4 3 7.6 3.2 5.4 C3.5 2.6 5 1 7 1 C9 1 10.5 2.6 10.8 5.4 C11 7.6 10.8 9.4 12 10.6 Z M5.4 12 C5.8 13.4 8.2 13.4 8.6 12" fill="none" stroke="#fff" stroke-width="1.1"/><circle cx="14.3" cy="11.3" r="5.4" fill="#f29aa6"/></svg>
<span class="t" style="left:1824.6px;top:1024.31px;font-size:9.5px;color:#5a0f1c;font-weight:bold;">2</span>
<svg style="left:1854px;top:1022px;" width="14" height="14" viewBox="0 0 14 14"><path d="M1 8.5 H12.5 V12 H4 L1.5 13.8 Z" fill="none" stroke="#e8e8e8" stroke-width="1.1"/><path d="M7.2 0.6 L10.4 1.4 L8.4 8.8 L5.2 8 Z" fill="#f7d038"/></svg>
<svg style="left:1877px;top:1023px;" width="17" height="12" viewBox="0 0 17 12"><path d="M0.6 0.4 H16.4 L8.5 11.8 Z" fill="#35b15a"/><path d="M5.2 3.6 L8 6.8 L11.8 2.4" fill="none" stroke="#fff" stroke-width="1.5"/></svg>
<svg style="left:1898px;top:1020px;" width="18" height="18" viewBox="0 0 18 18"><circle cx="9" cy="9" r="8" fill="#232323" stroke="#d8c8cc" stroke-width="1.3"/></svg>
<!-- g_task -->
<div class="a" style="left:0px;top:1040px;width:1920px;height:40px;background:#1c1c1c;"></div>
<svg style="left:16px;top:1052px;" width="16" height="16" viewBox="0 0 16 16"><path d="M0 2.3 L6.6 1.4 V7.6 H0 Z M7.4 1.3 L16 0 V7.6 H7.4 Z M0 8.4 H6.6 V14.6 L0 13.7 Z M7.4 8.4 H16 V16 L7.4 14.7 Z" fill="#fff"/></svg>
<div class="a" style="left:48px;top:1040px;width:288px;height:40px;background:#343434;border:1px solid #5a5a5a;border-bottom:none;"></div>
<svg style="left:59px;top:1051px;" width="18" height="18" viewBox="0 0 18 18"><circle cx="11" cy="6.5" r="5.3" fill="none" stroke="#e8e8e8" stroke-width="1.3"/><path d="M7.3 10.3 L1 16.8" stroke="#e8e8e8" stroke-width="1.4"/></svg>
<span class="t" style="left:88.5px;top:1053.10px;font-size:15px;color:#e4e4e4;letter-spacing:-0.283px;">Escriu aquí per cercar</span>
<svg style="left:257px;top:1040px;overflow:hidden;" width="79" height="40" viewBox="0 0 79 40"><defs><linearGradient id="bpk" x1="0" y1="0" x2="1" y2="1"><stop offset="0" stop-color="#1aa0f6"/><stop offset="1" stop-color="#1c5ee8"/></linearGradient></defs><path d="M12.5 28 L69 28.5 L79 36.5 L0 37.5 Z" fill="#e6c596"/><path d="M0 37.5 L79 36.5 V40 H0 Z" fill="#f1d5a8"/><ellipse cx="30" cy="35" rx="13" ry="2" fill="#cfae80" opacity="0.7"/><g transform="translate(12.3 37.2) scale(0.88) translate(-12.3 -37.2) translate(0 -0.6)"><path d="M12.3 20.5 L25.5 15.6 L38.6 11.6 L41.3 28.8 L28.7 32.8 L16.3 37.2 Z" fill="#3fae49"/><path d="M13.4 18.6 L25.4 13.8 L28 30.6 L16.4 35 Z" fill="#e9e5f4"/><path d="M25.4 13.8 L37.4 10.2 L40 26.8 L28 30.6 Z" fill="#f3f0fb"/><path d="M25.4 13.8 L28 30.6" stroke="#b9b2cc" stroke-width="0.8"/><path d="M16 20.6 L23.6 17.6 M16.6 23.6 L24.2 20.6 M17.2 26.6 L24.8 23.6 M17.8 29.6 L25.4 26.6 M28.4 15.8 L35.6 13.6 M29 18.8 L33 17.6 M29.6 21.8 L36.8 19.6 M30.2 24.8 L37.4 22.6" stroke="#c9c4d8" stroke-width="0.7"/></g><g transform="translate(30.6 20) scale(0.86) translate(-30.6 -20) translate(0.4 1.2)"><path d="M30.6 20 L31.3 17 L38.3 8.4 L41 10.6 L34 19.2 Z" fill="#f6b22c"/><path d="M30.6 20 L31.3 17 L33.2 18.6 Z" fill="#e79a8a"/><path d="M38.3 8.4 L39.4 7 L42.1 9.2 L41 10.6 Z" fill="#ece6f2"/><path d="M39.4 7 L40.8 5.2 C41.4 4.6 42.2 4.6 42.8 5.2 L43.6 5.8 C44.2 6.4 44.2 7 43.8 7.6 L42.1 9.2 Z" fill="#f0614a"/></g><path d="M54.6 8 C54.4 2.4 62.6 2.4 62.4 8" fill="none" stroke="#1f6df0" stroke-width="1.8"/><path d="M48.4 17 C48.4 9 53 6.6 58.4 6.6 C63.8 6.6 68.4 9 68.4 17 V30.6 C68.4 33 67 34 65 34 H51.8 C49.8 34 48.4 33 48.4 30.6 Z" fill="url(#bpk)"/><path d="M50.2 12.6 C52.6 8.6 64.2 8.6 66.6 12.6" fill="none" stroke="#c9b6f2" stroke-width="0.7"/><path d="M51 31.4 V27 C51 22 54 19.6 58.4 19.6 C62.8 19.6 65.8 22 65.8 27 V31.4 Z" fill="#2b8cf7"/><path d="M51 27 C51 22 54 19.6 58.4 19.6 C62.8 19.6 65.8 22 65.8 27" fill="none" stroke="#1550d0" stroke-width="0.8"/><path d="M51.4 31 C55 32.4 62 32.4 65.4 31" fill="none" stroke="#d98cf0" stroke-width="0.9"/><rect x="50.3" y="26" width="1.3" height="3" rx="0.6" fill="#e8f0ff"/></svg>
<svg style="left:352px;top:1052px;" width="17" height="16" viewBox="0 0 17 16"><rect x="0.5" y="4.5" width="10" height="7" fill="none" stroke="#fff" stroke-width="1"/><path d="M0.5 2.5 V0.5 H10.5 V2.5 M0.5 13.5 V15.5 H10.5 V13.5" fill="none" stroke="#fff" stroke-width="1"/><path d="M14.5 0 V3 M14.5 8 V15.5" stroke="#fff" stroke-width="1.3"/><rect x="13.4" y="4.2" width="2.3" height="2.5" fill="#fff"/></svg>
<div class="a" style="left:391px;top:1078px;width:40px;height:2px;background:#76b9ed;"></div>
<div class="a" style="left:587px;top:1078px;width:40px;height:2px;background:#76b9ed;"></div>
<div class="a" style="left:636px;top:1078px;width:40px;height:2px;background:#76b9ed;"></div>
<div class="a" style="left:685px;top:1078px;width:40px;height:2px;background:#76b9ed;"></div>
<div class="a" style="left:730px;top:1040px;width:48px;height:40px;background:#464646;"></div>
<div class="a" style="left:730px;top:1078px;width:48px;height:2px;background:#8fc6f0;"></div>
<svg style="left:399px;top:1050px;" width="23" height="19" viewBox="0 0 23 19"><path d="M0 2 C0 1 0.6 0.5 1.5 0.5 H8 L10 2.5 H21.5 C22.5 2.5 23 3 23 4 V17 H0 Z" fill="#e8a920"/><path d="M0 5.5 H23 V17.5 C23 18.3 22.5 19 21.5 19 H1.5 C0.6 19 0 18.3 0 17.5 Z" fill="#ffd75e"/><path d="M5 19 V12.5 H18 V19 H14.5 V16 H8.5 V19 Z" fill="#3a96dd"/></svg>
<svg style="left:448px;top:1048px;" width="24" height="24" viewBox="0 0 24 24"><rect x="0" y="0" width="24" height="24" rx="3" fill="#fb7a24"/><path d="M5.2 6.8 C7.6 4.2 10.4 6 12 8.4 C13.6 6 16.4 4.2 18.8 6.8 C20.6 8.8 19 11 17.4 12 C19 13 20.6 15.2 18.8 17.2 C16.4 19.8 13.6 18 12 15.6 C10.4 18 7.6 19.8 5.2 17.2 C3.4 15.2 5 13 6.6 12 C5 11 3.4 8.8 5.2 6.8 Z" fill="none" stroke="#fff" stroke-width="2.6" stroke-linejoin="round"/></svg>
<svg style="left:497px;top:1048px;" width="24" height="24" viewBox="0 0 24 24"><path d="M12.00 12.00 L1.61 6.00 A12.00 12.00 0 0 1 22.39 6.00 Z" fill="#ea4335"/><path d="M12.00 12.00 L22.39 6.00 A12.00 12.00 0 0 1 12.00 24.00 Z" fill="#fbbc05"/><path d="M12.00 12.00 L12.00 24.00 A12.00 12.00 0 0 1 1.61 6.00 Z" fill="#34a853"/><circle cx="12" cy="12" r="5.52" fill="#fff"/><circle cx="12" cy="12" r="4.32" fill="#4285f4"/></svg>
<svg style="left:546.5px;top:1048.5px;" width="23" height="23" viewBox="0 0 23 23"><circle cx="11.5" cy="11.5" r="11.5" fill="#fff"/><path d="M11.5 3 C14.8 7 15.6 10.4 14.6 13.6 C14 15.6 12.8 17 11.8 17.8 L11.6 20 H11.3 L11.1 17.8 C9.8 16.8 8.6 15.2 8.3 13 C7.8 9.6 9.2 6.2 11.5 3 Z" fill="#116149"/><path d="M11.5 3 V20" stroke="#1f9d6a" stroke-width="0.6"/></svg>
<svg style="left:595px;top:1048px;" width="28" height="26" viewBox="0 0 28 26"><path d="M12.00 12.00 L1.61 6.00 A12.00 12.00 0 0 1 22.39 6.00 Z" fill="#ea4335"/><path d="M12.00 12.00 L22.39 6.00 A12.00 12.00 0 0 1 12.00 24.00 Z" fill="#fbbc05"/><path d="M12.00 12.00 L12.00 24.00 A12.00 12.00 0 0 1 1.61 6.00 Z" fill="#34a853"/><circle cx="12" cy="12" r="5.52" fill="#fff"/><circle cx="12" cy="12" r="4.32" fill="#4285f4"/><circle cx="18.5" cy="18.5" r="6.8" fill="#e8c8b8"/><path d="M11.8 17.5 C11.5 11.5 22 10 25 15 C26 17 25.4 19.5 24.8 20.5 C23.5 17 20 15 15.5 16.5 C14 17.2 13.4 19 13.2 21.5 C12.2 20.5 11.9 19 11.8 17.5 Z" fill="#1a1412"/></svg>
<div class="a" style="left:645px;top:1048.2px;width:22.2px;height:22px;background:#0b0b3d;border:1.4px solid #8fbcff;"></div>
<span class="t" style="left:650px;top:1051.62px;font-size:13.5px;color:#8fbcff;font-weight:bold;letter-spacing:-2.156px;">Ps</span>
<svg style="left:693px;top:1048px;" width="25" height="24" viewBox="0 0 25 24"><path d="M17.2 0.2 L23.8 3.5 V20.7 L17.2 24 L8.4 15.4 L3.8 18 L0.3 16 V8.2 L3.8 6.4 L8.4 8.8 Z M17.7 8.2 L12.6 12.1 L17.7 16 Z M4.4 10 L6.8 12.1 L4.4 14.2 Z" fill="#9d72df" fill-rule="evenodd"/><path d="M0.3 8.2 L3.8 6.4 L17.2 20 V24 L0.3 10.6 Z" fill="#7f55c4" opacity="0.75"/><path d="M17.2 0.2 L23.8 3.5 V20.7 L17.2 24 Z" fill="#d2adff"/></svg>
<svg style="left:743.5px;top:1052.5px;" width="21" height="14" viewBox="0 0 21 14"><rect x="0" y="0" width="21" height="14" fill="#f4f4f4"/><rect x="4.5" y="2" width="8.5" height="10.5" fill="#0c7bd8"/><path d="M14.5 3 H19.5 M14.5 5.5 H19.5 M14.5 8 H19.5 M14.5 10.5 H19.5 M1.5 3 H3.5 M1.5 5.5 H3.5 M1.5 8 H3.5 M1.5 10.5 H3.5" stroke="#9a9a9a" stroke-width="0.9"/></svg>
<svg style="left:1476.5px;top:1047.5px;" width="25" height="22" viewBox="0 0 25 22"><defs><linearGradient id="sun" x1="0" y1="0" x2="1" y2="1"><stop offset="0" stop-color="#fbb52c"/><stop offset="1" stop-color="#e46c0c"/></linearGradient><linearGradient id="cld" x1="0" y1="0" x2="0" y2="1"><stop offset="0" stop-color="#f6f9ff"/><stop offset="1" stop-color="#9cbfee"/></linearGradient></defs><circle cx="12" cy="12.2" r="9.7" fill="url(#sun)"/><path transform="translate(0.3 0.4)" d="M2.6 8.7 C-0.6 8.7 -0.6 4.6 2.4 4.4 C2.4 1.4 6.4 0.2 8 2.6 C10.4 1.6 12.2 3.4 11.8 5.2 C14.6 5 14.8 8.7 12.2 8.7 Z" fill="url(#cld)"/><path transform="translate(10.4 12.6)" d="M2.6 8.7 C-0.6 8.7 -0.6 4.6 2.4 4.4 C2.4 1.4 6.4 0.2 8 2.6 C10.4 1.6 12.2 3.4 11.8 5.2 C14.6 5 14.8 8.7 12.2 8.7 Z" fill="url(#cld)"/></svg>
<span class="t" style="left:1508.8px;top:1051.60px;font-size:15px;color:#f4f4f4;letter-spacing:-1.228px;">25°C</span>
<span class="t" style="left:1546.8px;top:1051.60px;font-size:15px;color:#f4f4f4;letter-spacing:-0.863px;">Parc. soleado</span>
<svg style="left:1653px;top:1056.5px;" width="12" height="8" viewBox="0 0 12 8"><path d="M0.6 7 L6 1.2 L11.4 7" fill="none" stroke="#fff" stroke-width="1.2"/></svg>
<svg style="left:1674px;top:1053px;" width="18" height="13" viewBox="0 0 18 13"><rect x="4.6" y="3.6" width="11.8" height="7.8" fill="none" stroke="#fff" stroke-width="1.1"/><rect x="16.6" y="5.8" width="1.4" height="3.4" fill="#fff"/><rect x="6" y="5" width="7" height="5" fill="#fff"/><path d="M1 0.5 V2.5 M3.6 0.5 V2.5 M0.3 2.6 H4.3 V4.6 C4.3 6 3.4 6.6 2.3 6.6 C1.2 6.6 0.3 6 0.3 4.6 Z M2.3 6.6 V9 H4.6" fill="none" stroke="#fff" stroke-width="1"/></svg>
<svg style="left:1699px;top:1054px;" width="17" height="11" viewBox="0 0 17 11"><path d="M4 10.6 C0.2 10.6 -0.4 5.8 3.2 5.2 C3.6 2 7.6 1.2 9.4 3.4 C12 1.6 15 3.4 14.4 6.2 C17.4 6.4 17.4 10.6 14.4 10.6 Z" fill="#e4e4e4"/><path d="M3.2 5.2 C4.6 4.8 6 5.4 7 6.6 L14.4 6.2" fill="none" stroke="#a8a8a8" stroke-width="0.7"/></svg>
<svg style="left:1726px;top:1053px;" width="14" height="14" viewBox="0 0 14 14"><path d="M0.6 12.8 C0.6 6 6 0.8 12.8 0.8 M3.8 13 C3.8 8 8 4 13 4 M7 13.2 C7 10 9.8 7.2 13 7.2" fill="none" stroke="#c8c8c8" stroke-width="1.1"/><circle cx="11.6" cy="12" r="1.5" fill="#fff"/></svg>
<svg style="left:1747px;top:1053px;" width="17" height="14" viewBox="0 0 17 14"><path d="M0.6 4.6 H3.4 L7 1.2 V12.8 L3.4 9.4 H0.6 Z" fill="none" stroke="#fff" stroke-width="1.1"/><path d="M9.4 4.6 C10.6 6 10.6 8 9.4 9.4 M11.6 2.8 C13.8 5.2 13.8 8.8 11.6 11.2 M13.8 1 C17 4.6 17 9.4 13.8 13" fill="none" stroke="#fff" stroke-width="1"/></svg>
<span class="t" style="left:1774.5px;top:1051.84px;color:#f4f4f4;letter-spacing:-0.870px;">CAT</span>
<span class="t" style="left:1822px;top:1042.84px;color:#f4f4f4;letter-spacing:-0.805px;">19:40</span>
<span class="t" style="left:1810px;top:1060.84px;color:#f4f4f4;letter-spacing:-0.320px;">1/10/2023</span>
<svg style="left:1878.5px;top:1052px;" width="17" height="14" viewBox="0 0 17 14"><path d="M0 0 H16.5 V11 H4 L0 14 Z" fill="#fff"/><path d="M3 3 H13.5 M3 5.7 H13.5 M3 8.4 H10" stroke="#1c1c1c" stroke-width="1"/></svg>
<svg style="left:1886.5px;top:1059px;" width="17" height="17" viewBox="0 0 17 17"><circle cx="8.5" cy="8.5" r="7.6" fill="#1c1c1c" stroke="#9a9a9a" stroke-width="1.2"/></svg>
<span class="t" style="left:1892px;top:1060.19px;font-size:11px;color:#fff;font-weight:bold;">2</span>
<div class="a" style="left:1915px;top:1040px;width:1px;height:40px;background:#5a5a5a;"></div>
</body></html>
